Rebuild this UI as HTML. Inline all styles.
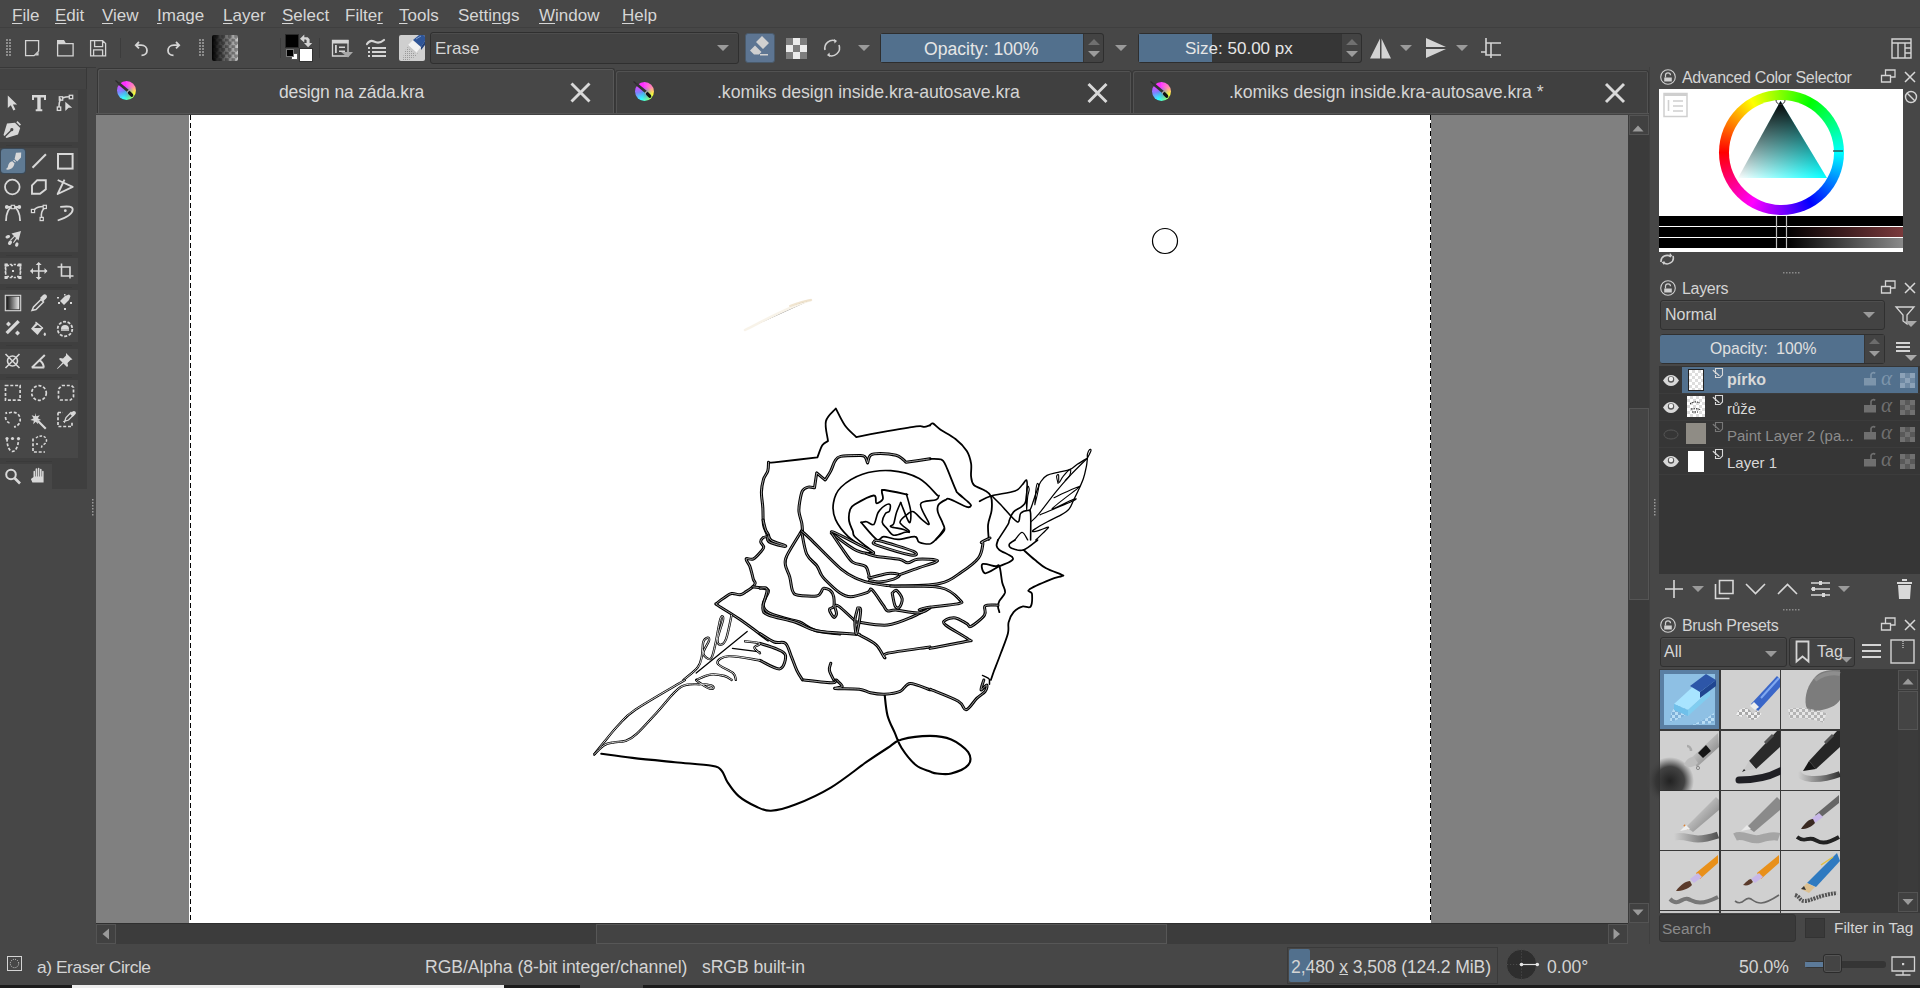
<!DOCTYPE html>
<html><head><meta charset="utf-8">
<style>
*{box-sizing:border-box;margin:0;padding:0}
html,body{width:1920px;height:988px;overflow:hidden;background:#474747;font-family:"Liberation Sans",sans-serif;color:#d2d2d2}
.a{position:absolute}
.mi{position:absolute;top:5.5px;font-size:17px;color:#d6d6d6;white-space:nowrap}
.mi u{text-decoration:underline;text-underline-offset:2px}
.t{position:absolute;white-space:nowrap}
svg{position:absolute;overflow:visible}
</style></head><body>
<!-- MENU BAR -->
<div class="a" style="left:0;top:0;width:1920px;height:28px;background:#474747;border-bottom:1px solid #3f3f3f"></div>
<div class="mi" style="left:12px"><u>F</u>ile</div>
<div class="mi" style="left:55px"><u>E</u>dit</div>
<div class="mi" style="left:102px"><u>V</u>iew</div>
<div class="mi" style="left:157px"><u>I</u>mage</div>
<div class="mi" style="left:223px"><u>L</u>ayer</div>
<div class="mi" style="left:282px"><u>S</u>elect</div>
<div class="mi" style="left:345px">Filte<u>r</u></div>
<div class="mi" style="left:399px"><u>T</u>ools</div>
<div class="mi" style="left:458px">Setti<u>n</u>gs</div>
<div class="mi" style="left:539px"><u>W</u>indow</div>
<div class="mi" style="left:622px"><u>H</u>elp</div>

<!-- TOOLBAR -->

<div class="a" style="left:0;top:67px;width:1920px;height:1px;background:#3a3a3a"></div>
<svg style="left:0;top:0" width="1920" height="70" viewBox="0 0 1920 70">
<g fill="#8c8c8c">
<rect x="6" y="39" width="2" height="2"/><rect x="9" y="39" width="2" height="2"/>
<rect x="6" y="42" width="2" height="2"/><rect x="9" y="42" width="2" height="2"/>
<rect x="6" y="45" width="2" height="2"/><rect x="9" y="45" width="2" height="2"/>
<rect x="6" y="48" width="2" height="2"/><rect x="9" y="48" width="2" height="2"/>
<rect x="6" y="51" width="2" height="2"/><rect x="9" y="51" width="2" height="2"/>
<rect x="6" y="54" width="2" height="2"/><rect x="9" y="54" width="2" height="2"/>
<rect x="199" y="39" width="2" height="2"/><rect x="202" y="39" width="2" height="2"/>
<rect x="199" y="42" width="2" height="2"/><rect x="202" y="42" width="2" height="2"/>
<rect x="199" y="45" width="2" height="2"/><rect x="202" y="45" width="2" height="2"/>
<rect x="199" y="48" width="2" height="2"/><rect x="202" y="48" width="2" height="2"/>
<rect x="199" y="51" width="2" height="2"/><rect x="202" y="51" width="2" height="2"/>
<rect x="199" y="54" width="2" height="2"/><rect x="202" y="54" width="2" height="2"/>
</g>
<g fill="none" stroke="#d4d4d4" stroke-width="1.3">
<path d="M25.6 40.6h13v10.5l-4.5 4.5h-8.5z"/>
<path d="M57.6 43.6h15.5v12.2h-15.5z"/>
<path d="M90.6 40.6h12l3 3v12.2h-15z M94.6 40.6v6h8v-6 M93.6 55.8v-6h9v6"/>
<path d="M139 42l-3.2 3.2 3.2 3.2 M136 45.2h5c4 0 6 2.5 6 5.2s-2 5-5.5 5" stroke-width="1.8"/>
<path d="M176 42l3.2 3.2-3.2 3.2 M179 45.2h-5c-4 0-6 2.5-6 5.2s2 5 5.5 5" stroke-width="1.8"/>
</g>
<path d="M57 40h7l2 3.6h-9z M35 55.6l3.6-3.6v3.6z" fill="#d4d4d4"/>
<rect x="120" y="38" width="1" height="20" fill="#3c3c3c"/>
<rect x="280" y="38" width="1" height="20" fill="#3c3c3c"/>
<rect x="319" y="38" width="1" height="20" fill="#3c3c3c"/>
</svg>
<div class="a" style="left:212px;top:35px;width:26px;height:26px;border-radius:2px;background:linear-gradient(90deg,#000 0%,rgba(0,0,0,0) 100%),repeating-conic-gradient(#888 0 25%,#c8c8c8 0 50%) 0 0/6.5px 6.5px"></div>
<!-- fg bg -->
<div class="a" style="left:285px;top:34px;width:14px;height:14px;background:#000;border:1px solid #2a2a2a"></div>
<div class="a" style="left:299px;top:48px;width:14px;height:14px;background:#fff;border:1px solid #333"></div>
<div class="a" style="left:291px;top:53px;width:7px;height:7px;background:#fff;border:1px solid #555"></div>
<div class="a" style="left:286px;top:49px;width:8px;height:8px;background:#000;border:1px solid #777"></div>
<svg style="left:0;top:0" width="1920" height="70">
<path d="M300 38.8l4.3-4.3v2.8h3.4l1.9 1.9v3.7h2.6l-4.1 4.3-4.1-4.3h2.6v-2.6l-.7-.7h-1.6v2.8z" fill="#d4d4d4"/>
<path d="M332.5 40.5h15.5v15.5h-15.5z" fill="none" stroke="#d4d4d4" stroke-width="1.3"/>
<path d="M332 40h16.5v3.5h-16.5z M335 45v8h1.8v-8z M339 46.5h6v1.6h-6z M339 50.5h6v1.6h-6z" fill="#d4d4d4"/>
<path d="M341 52h12l-5 5.5z" fill="#a8a8a8"/>
<path d="M367 44c2-3 4-4 7-2.5s6 2 10-1.5" fill="none" stroke="#d4d4d4" stroke-width="2.2" stroke-linecap="round"/>
<g fill="#d4d4d4"><rect x="368" y="47" width="2" height="2"/><rect x="372" y="47" width="14" height="2"/><rect x="368" y="51" width="2" height="2"/><rect x="372" y="51" width="14" height="2"/><rect x="368" y="55" width="2" height="2"/><rect x="372" y="55" width="14" height="2"/></g>
</svg>
<!-- eraser preset icon -->
<div class="a" style="left:399px;top:35px;width:26px;height:26px;border-radius:2px;background:#cfcfcf;overflow:hidden">
<svg width="26" height="26" style="left:0;top:0">
<defs><pattern id="dotp" width="2" height="2" patternUnits="userSpaceOnUse"><rect width="1" height="1" fill="#9a9a9a"/></pattern></defs>
<path d="M4 26c0-7 2-12 6-15l9 8c-4 4-9 7-15 7z" fill="url(#dotp)"/>
<path d="M9 10l5-5 8 7-5 6z" fill="#f2f2f2"/><path d="M9 10l8 7v3l-8-7z" fill="#c8c8c8"/>
<path d="M14 5l6-5h6v6l-4 6z" fill="#2f5597"/><path d="M22 12l4-6v4l-4 5z" fill="#1f3f7a"/>
<path d="M17 4l5-3" stroke="#7d9cd0" stroke-width="1"/>
</svg></div>
<!-- brush name combo -->
<div class="a" style="left:430px;top:32px;width:309px;height:32px;border-radius:3px;background:#424242;border:1px solid #2f2f2f;box-shadow:inset 0 1px 0 #4d4d4d"></div>
<div class="t" style="left:435px;top:39px;font-size:17px;color:#d6d6d6">Erase</div>
<svg style="left:0;top:0" width="1920" height="70">
<path d="M717 45h12l-6 6z M858 45h12l-6 6z M1115 45h12l-6 6z M1400 45h12l-6 6z M1456 45h12l-6 6z" fill="#9a9a9a"/>
</svg>
<!-- eraser toggle -->
<div class="a" style="left:745px;top:33px;width:30px;height:30px;border-radius:3px;background:#5d7592;border:1px solid #4a5a6a"></div>
<svg style="left:0;top:0" width="1920" height="70">
<path d="M756 42l6-6 7 7-6 6z M750 50.5l5-5 6.5 6.5-2.5 2.5h-5z" fill="#d0d0d0"/>
<rect x="760" y="54" width="8" height="1.5" fill="#d0d0d0"/>
<g>
<rect x="786" y="38" width="21" height="21" fill="#7e7e7e"/>
<rect x="793" y="38" width="7" height="7" fill="#ececec"/>
<rect x="786" y="45" width="7" height="7" fill="#ececec"/>
<rect x="800" y="45" width="7" height="7" fill="#ececec"/>
<rect x="793" y="52" width="7" height="7" fill="#ececec"/>
</g>
<path d="M825 50a8 8 0 0 1 11-9 M839 45a8 8 0 0 1-11 10" fill="none" stroke="#d0d0d0" stroke-width="1.6"/>
<path d="M834 39l3 2-2.5 2.5z M830 57l-3-2 2.5-2.5z" fill="#d0d0d0"/>
</svg>
<!-- opacity slider -->
<div class="a" style="left:880px;top:33px;width:224px;height:30px;border-radius:3px;background:#3b3b3b;border:1px solid #2e2e2e"></div>
<div class="a" style="left:881px;top:34px;width:202px;height:28px;background:#52708d"></div>
<div class="a" style="left:1083px;top:34px;width:20px;height:28px;background:#434343;border-left:1px solid #353535;border-radius:0 3px 3px 0"></div>
<div class="t" style="left:924px;top:39px;font-size:17.6px;color:#e6e6e6">Opacity: 100%</div>
<!-- size slider -->
<div class="a" style="left:1138px;top:33px;width:224px;height:30px;border-radius:3px;background:#363636;border:1px solid #2e2e2e"></div>
<div class="a" style="left:1139px;top:34px;width:73px;height:28px;background:#52708d"></div>
<div class="a" style="left:1341px;top:34px;width:20px;height:28px;background:#434343;border-left:1px solid #353535;border-radius:0 3px 3px 0"></div>
<div class="t" style="left:1185px;top:39px;font-size:17px;color:#e6e6e6">Size: 50.00 px</div>
<svg style="left:0;top:0" width="1920" height="70">
<path d="M1088 45l6-6 6 6z M1346 45l6-6 6 6z" fill="#707070"/>
<path d="M1088 51h12l-6 6z M1346 51h12l-6 6z" fill="#9c9c9c"/>
<path d="M1380 38.5v20h-10z M1381.5 38.5v20h9.5z" fill="#d4d4d4"/>
<path d="M1426 38v9h20z M1426 58v-9h20z" fill="#d4d4d4"/>
<path d="M1486 38v17h15 M1481 52h5 M1491 43v15 M1486 43h15" fill="none" stroke="#d4d4d4" stroke-width="1.6"/>
<path d="M1892 39h19v19h-19z M1892 43h19 M1898 43v15 M1905 43v15 M1905 48h6 M1905 53h6" fill="none" stroke="#d4d4d4" stroke-width="1.4"/>
</svg>


<!-- TOOLBOX -->
<div class="a" style="left:0;top:67px;width:87px;height:23px;background:#434343;border:1px solid #383838;border-left:none;box-shadow:inset 0 1px 0 #4d4d4d"></div>
<div class="a" style="left:0;top:89px;width:87px;height:400px;background:#3f3f3f"></div>

<div class="a" style="left:0;top:90px;width:78px;height:52px;background:#474747"></div>
<div class="a" style="left:0;top:148px;width:78px;height:104px;background:#474747"></div>
<div class="a" style="left:0;top:258px;width:78px;height:26px;background:#474747"></div>
<div class="a" style="left:0;top:290px;width:78px;height:52px;background:#474747"></div>
<div class="a" style="left:0;top:349px;width:78px;height:25px;background:#474747"></div>
<div class="a" style="left:0;top:380px;width:78px;height:78px;background:#474747"></div>
<div class="a" style="left:0;top:464px;width:52px;height:25px;background:#474747"></div>
<div class="a" style="left:1px;top:149px;width:24px;height:24px;border-radius:3px;background:#5f7a93;box-shadow:0 0 0 1px #3b4a58"></div>
<svg style="left:0;top:0" width="100" height="500">
<g fill="#3a3a3a"><rect x="6" y="145" width="66" height="1"/><rect x="6" y="255" width="66" height="1"/><rect x="6" y="287" width="66" height="1"/><rect x="6" y="345" width="66" height="1"/><rect x="6" y="377" width="66" height="1"/><rect x="6" y="461" width="46" height="1"/></g>
<g fill="#d8d8d8" stroke="none">
<!-- select arrow -->
<path d="M7.8 95.5v12.5l3-2.8 2.6 5.2 2-1-2.5-5h4.2z"/><path d="M65.3 101.7L72.2 107.8H68.6L65.3 111Z"/>
<!-- T -->
<path d="M32 95H46V100H44V97.6H40.7V109.2H42.3V111.2H35.7V109.2H37.3V97.6H34V100H32Z"/>
<!-- brush -->
<path d="M16 152.8l5.2-.2-.2 5-3.8 4-2.6-2.6z M14 159.7l2 2-.9.9-2-2z M12.3 161.2l2.2 2.2c-.6 3-2.6 6-7 6.3l-1.8-.8c1.6-.6 2.3-1.8 2.4-3.2.4-2.2 2-4.2 4.2-4.5z"/>
</g>
<g fill="none" stroke="#d8d8d8" stroke-width="1.7">
<path d="M59 107c0-4 .5-6.5 2-8.5 M62.5 98c2.5-1 5-1.2 7-1.2" stroke-width="1.5"/>
<rect x="69.3" y="95.3" width="3.4" height="3.4" stroke-width="1.3"/><rect x="59.3" y="96.8" width="3.4" height="3.4" stroke-width="1.3"/>
<rect x="57.3" y="107" width="3.4" height="3.4" stroke-width="1.3"/>
<path d="M32.5 167.7l13.4-13.4" stroke-width="2"/>
<rect x="58" y="154" width="14.6" height="14.6" stroke-width="2"/>
<circle cx="12.3" cy="187" r="7.3" stroke-width="1.8"/>
<path d="M37.2 180.2h8.6v9l-5.8 4.6h-8v-8.4z" stroke-width="1.9"/>
<path d="M57.7 180l15 6.8-15 7.2 6.8-14.4" stroke-width="1.9" stroke-linejoin="round"/>
<path d="M6 221c0-8 2.8-13.8 6.9-13.8s7.2 5.8 7.2 13.8 M6.8 207h12.5" stroke-width="1.8"/>
<path d="M34.5 209.5c2.5-2.5 5.5-3 8.5-3 M44 208.5c-2.5 2.5-3 5.5-2.4 8.7" stroke-width="1.6"/>
<rect x="31.4" y="209.4" width="3.2" height="3.2" stroke-width="1.2"/>
<rect x="43.2" y="205.3" width="3.2" height="3.2" stroke-width="1.2"/>
<rect x="40.1" y="217.4" width="3.2" height="3.2" stroke-width="1.2"/>
<path d="M57.7 220.5c6-2 15-5.5 15-11 0-3-4-3.5-12.5-2.6" stroke-width="1.8"/>
</g>
<g fill="#d8d8d8">
<circle cx="6.8" cy="207" r="1.9"/><circle cx="19.3" cy="207" r="1.9"/><rect x="11.2" y="205.3" width="3.4" height="3.4" fill="#474747" stroke="#d8d8d8" stroke-width="1.1"/>
<circle cx="65.3" cy="210.7" r="1.4"/>
<!-- pen nib -->
<path d="M17.5 121l3.5 3.5-1.2 1.2-3.5-3.5z M15 122.8l5.2 5.2-2.2 6.5-11.5 3.5-1-1 5.8-5.8a1.6 1.6 0 1 0-1-1l-5.8 5.8-1-1 3.5-11.5z"/>
<!-- multibrush -->
<path d="M21 231l-9.5 2.5 2.5 2.5-4 4 .8.8 4-4 1.2 1.2-3 4.5.8.6 3.2-4.2 1.5 1.5 2.5-9.4z"/>
<ellipse cx="7.8" cy="236.8" rx="2.4" ry="1.6" transform="rotate(-20 7.8 236.8)"/><ellipse cx="10" cy="242.8" rx="1.8" ry="2.4" transform="rotate(35 10 242.8)"/><ellipse cx="16.8" cy="244.6" rx="1.6" ry="2.3" transform="rotate(20 16.8 244.6)"/>
</g>
<!-- group3 transform -->
<g fill="none" stroke="#d8d8d8" stroke-width="1.6">
<path d="M7 265.5h2 M11 265.5h4 M17 265.5h2 M7 276.5h2 M11 276.5h4 M17 276.5h2 M5.5 267v2 M5.5 271v2 M5.5 275v0 M20.5 267v2 M20.5 271v2" stroke-dasharray="2 2"/>
<path d="M5.7 264.5v13 M20.3 264.5v13 M5.7 264.5h14.6 M5.7 277.5h14.6" stroke-dasharray="2.2 1.8"/>
<path d="M38.7 263v16 M30.7 271h16"/>
<path d="M61.5 263.5v12.5h12 M57.5 267h12.5v11.5"/>
</g>
<g fill="#d8d8d8">
<rect x="4.5" y="263.5" width="3" height="3"/><rect x="18.5" y="263.5" width="3" height="3"/><rect x="4.5" y="276" width="3" height="3"/><rect x="18.5" y="276" width="3" height="3"/><rect x="12" y="270" width="2" height="2"/>
<path d="M38.7 262l-3 3h6z M38.7 280l-3-3h6z M30 271l3-3v6z M47.5 271l-3-3v6z"/>
</g>
<!-- group4 -->
<defs><linearGradient id="tg" x1="0" x2="1" y1="0" y2="0"><stop offset="0" stop-color="#1a1a1a"/><stop offset="1" stop-color="#e8e8e8"/></linearGradient></defs>
<rect x="5.3" y="295.3" width="15.4" height="15.4" fill="none" stroke="#d8d8d8" stroke-width="1.1"/><rect x="6.8" y="296.8" width="12.4" height="12.4" fill="url(#tg)"/>
<g fill="none" stroke="#d8d8d8" stroke-width="1.5">
<path d="M32 310.5l1.5-3.5 7.5-7.5 2.5 2.5-7.5 7.5z"/>
</g>
<g fill="#d8d8d8">
<path d="M40 298l3-3c1-1 2.5-1 3.3 0s1 2.3 0 3.3l-3 3z"/>
<path d="M65 296l4-1.5 1.5 1.5-1.5 4-5 5-4-4z"/>
<rect x="58" y="302" width="2" height="2"/><rect x="64" y="308" width="2" height="2"/><rect x="70" y="302" width="2" height="2"/><rect x="64" y="294" width="1.5" height="1.5"/><rect x="57" y="297" width="2" height="1.5"/>
<!-- fill assistant -->
<path d="M5.5 332l12-12 2.3 2.3-12 12z"/>
<path d="M8.5 321.5l2.5 2.5-2.5 2.5-2.5-2.5z M17.5 330.5l2.5 2.5-2.5 2.5-2.5-2.5z"/>
<!-- bucket -->
<path d="M31 328.7l4.6-5.4 1-1 6.5 5.6-5.6 7.2z"/><ellipse cx="44.8" cy="334.3" rx="1.1" ry="1.7"/><path d="M35.5 322l7.5 6.5" stroke="#d8d8d8" stroke-width="1.2"/>
</g>
<path d="M34 328h7.5l-3.8-3.3z" fill="#474747"/>
<circle cx="65" cy="329" r="7.3" fill="none" stroke="#d8d8d8" stroke-width="1.8" stroke-dasharray="3 1.6"/>
<path d="M61 329a4 4 0 0 1 8 0z" fill="#d8d8d8"/><path d="M61 330h8" stroke="#d8d8d8" stroke-width="1.5"/>
<!-- group5 -->
<g fill="none" stroke="#d8d8d8" stroke-width="1.6">
<circle cx="12.5" cy="361" r="5"/>
<path d="M5.5 354l14 14 M19.5 354l-14 14"/>
<path d="M31.8 367.6h12.4 M31.8 367.6l13-12.6 M39.8 360.4c2.4 1.8 3.8 4.2 4 7.2" stroke-width="2"/>
</g>
<path d="M66 353l6.5 6.5-2 .5-3 3 .5 3-1 1-3.5-3.5-6 5.5-.5-.5 5.5-6-3.5-3.5 1-1 3 .5 3-3z" fill="#d8d8d8"/>
<!-- group6 selections -->
<g fill="none" stroke="#d8d8d8" stroke-width="1.7" stroke-dasharray="3 1.8">
<rect x="5.5" y="385.5" width="14.6" height="14.6"/>
<circle cx="39" cy="393" r="7.3"/>
<path d="M62 385.5h9.5l2 2v9.5l-3 3h-10l-2-2v-9z"/>
<path d="M9 413c5-2 10 0 11 5s-2 8-6 9" />
<path d="M6 412l.5 2 M5.5 417c0 3 2 5.5 4 6"/>
<path d="M7 438.5c0 8 2.5 13 5.5 13s6-5 6-13"/>
<path d="M33 438.5v13.5h12"/>
<path d="M58 412.5v14h14v-5"/>
<path d="M58 412.5h5"/>
</g>
<g fill="#d8d8d8">
<path d="M35 413l1.3 3.3 3.5-1-2 3 3.3 1.8-3.5.6.6 3.5-2.5-2.5-2.5 2.5.6-3.5-3.5-.6 3.3-1.8-2-3 3.5 1z"/>
<path d="M38.5 420l8 8-1.5 1.5-8-8z"/>
<path d="M64.5 422l1.5-4.5 5-5 2.5 2.5-5 5-4.5 1.5z" fill="none" stroke="#d8d8d8" stroke-width="1.3"/>
<path d="M70 414l2.5-2.5c.8-.8 2-.8 2.8 0s.8 2 0 2.8l-2.5 2.5z"/>
<circle cx="7" cy="438.5" r="1.6"/><circle cx="12.5" cy="438.5" r="1.6"/><circle cx="18.5" cy="438.5" r="1.6"/>
<path d="M36 438c1.5-1.5 3.5-2 5.5-2 3 0 5 2 5 4.5s-2 3.5-3.5 4.5-1.5 2-1.5 3" fill="none" stroke="#d8d8d8" stroke-width="1.5" stroke-dasharray="2.5 1.5"/>
<circle cx="37" cy="444" r="1.1"/>
</g>
<!-- zoom/pan -->
<g fill="none" stroke="#d8d8d8" stroke-width="2">
<circle cx="11" cy="474.5" r="4.8"/>
<path d="M14.5 478l5.5 5.5" stroke-width="2.6"/>
</g>
<path d="M33.5 477v-5.5c0-1 1.5-1 1.5 0v5h.6v-7.5c0-1 1.6-1 1.6 0v7.5h.6v-8c0-1 1.6-1 1.6 0v8h.6v-7c0-1 1.6-1 1.6 0v7h.5v-5c0-1 1.5-1 1.5 0v11h-11.2l-1.5-3.5z" fill="#d8d8d8"/>
</svg>


<!-- TABS -->
<div class="a" style="left:96px;top:115px;width:1532px;height:808px;background:#808080"></div>

<div class="a" style="left:96px;top:67px;width:1553px;height:48px;background:#474747"></div>
<div class="a" style="left:97px;top:68px;width:518px;height:47px;background:#474747;border:1px solid #363636;border-bottom:none;border-radius:3px 3px 0 0;box-shadow:inset 1px 1px 0 #575757,inset -1px 0 0 #575757"></div>
<div class="a" style="left:615px;top:70px;width:517px;height:45px;background:#404040;border:1px solid #383838;border-bottom:none;border-radius:3px 3px 0 0;box-shadow:inset 1px 1px 0 #525252,inset -1px 0 0 #525252"></div>
<div class="a" style="left:1132px;top:70px;width:517px;height:45px;background:#404040;border:1px solid #383838;border-bottom:none;border-radius:3px 3px 0 0;box-shadow:inset 1px 1px 0 #525252,inset -1px 0 0 #525252"></div>
<div class="a" style="left:96px;top:113px;width:1553px;height:2px;background:#424242;border-top:1px solid #555"></div>
<div class="t" style="left:279px;top:81.5px;font-size:17.5px;letter-spacing:-0.15px;color:#d8d8d8">design na záda.kra</div>
<div class="t" style="left:717px;top:81.5px;font-size:17.7px;letter-spacing:-0.05px;color:#d4d4d4">.komiks design inside.kra-autosave.kra</div>
<div class="t" style="left:1229px;top:81.5px;font-size:17.7px;letter-spacing:-0.05px;color:#d4d4d4">.komiks design inside.kra-autosave.kra *</div>
<div class="a" style="left:116.5px;top:80.5px;width:19px;height:19px;border-radius:50%;background:conic-gradient(from 0deg,#ff40ff 0deg,#ff8ab0 60deg,#ffff30 110deg,#80ff80 150deg,#30ffff 200deg,#8080ff 260deg,#ff30ff 330deg)"></div>
<div class="a" style="left:116.5px;top:80.5px;width:19px;height:19px;border-radius:50%;background:radial-gradient(circle at 55% 60%,rgba(80,140,220,.8) 0,rgba(80,140,220,0) 45%)"></div>
<svg style="left:0;top:0" width="1920" height="130"><path d="M115.5 80.5l8 6.5" stroke="#2a2a2a" stroke-width="1.2"/><path d="M119 83.5l9 7.5" stroke="#333" stroke-width="2.8" stroke-linecap="round"/><path d="M127.5 91l1.5 1.2" stroke="#bbb" stroke-width="2.6"/><path d="M129.5 92.8l2.2 2.4" stroke="#111" stroke-width="3.2" stroke-linecap="round"/></svg><div class="a" style="left:634.5px;top:81.5px;width:19px;height:19px;border-radius:50%;background:conic-gradient(from 0deg,#ff40ff 0deg,#ff8ab0 60deg,#ffff30 110deg,#80ff80 150deg,#30ffff 200deg,#8080ff 260deg,#ff30ff 330deg)"></div>
<div class="a" style="left:634.5px;top:81.5px;width:19px;height:19px;border-radius:50%;background:radial-gradient(circle at 55% 60%,rgba(80,140,220,.8) 0,rgba(80,140,220,0) 45%)"></div>
<svg style="left:0;top:0" width="1920" height="130"><path d="M633.5 81.5l8 6.5" stroke="#2a2a2a" stroke-width="1.2"/><path d="M637 84.5l9 7.5" stroke="#333" stroke-width="2.8" stroke-linecap="round"/><path d="M645.5 92l1.5 1.2" stroke="#bbb" stroke-width="2.6"/><path d="M647.5 93.8l2.2 2.4" stroke="#111" stroke-width="3.2" stroke-linecap="round"/></svg><div class="a" style="left:1151.5px;top:81.5px;width:19px;height:19px;border-radius:50%;background:conic-gradient(from 0deg,#ff40ff 0deg,#ff8ab0 60deg,#ffff30 110deg,#80ff80 150deg,#30ffff 200deg,#8080ff 260deg,#ff30ff 330deg)"></div>
<div class="a" style="left:1151.5px;top:81.5px;width:19px;height:19px;border-radius:50%;background:radial-gradient(circle at 55% 60%,rgba(80,140,220,.8) 0,rgba(80,140,220,0) 45%)"></div>
<svg style="left:0;top:0" width="1920" height="130"><path d="M1150.5 81.5l8 6.5" stroke="#2a2a2a" stroke-width="1.2"/><path d="M1154 84.5l9 7.5" stroke="#333" stroke-width="2.8" stroke-linecap="round"/><path d="M1162.5 92l1.5 1.2" stroke="#bbb" stroke-width="2.6"/><path d="M1164.5 93.8l2.2 2.4" stroke="#111" stroke-width="3.2" stroke-linecap="round"/></svg><svg style="left:0;top:0" width="1920" height="130"><path d="M571.5 83.5l18 18M589.5 83.5l-18 18" stroke="#d9d9d9" stroke-width="2.9"/></svg><svg style="left:0;top:0" width="1920" height="130"><path d="M1088.5 84l18 18M1106.5 84l-18 18" stroke="#d9d9d9" stroke-width="2.9"/></svg><svg style="left:0;top:0" width="1920" height="130"><path d="M1606 84l18 18M1624 84l-18 18" stroke="#d9d9d9" stroke-width="2.9"/></svg>

<!-- CANVAS PAGE -->
<div class="a" style="left:189px;top:115px;width:1242px;height:808px;background:#fff"></div>

<div class="a" style="left:190px;top:115px;width:1px;height:808px;background:repeating-linear-gradient(180deg,#000 0 5px,#fff 5px 8px)"></div>
<div class="a" style="left:1430px;top:115px;width:1px;height:808px;background:repeating-linear-gradient(180deg,#000 0 5px,#fff 5px 8px)"></div>
<svg style="left:0;top:0" width="1920" height="988">
<circle cx="1165" cy="241" r="12.5" fill="none" stroke="#000" stroke-width="1.2"/>
<path d="M745 330c20-10 45-24 66-30" stroke="#f3ead8" stroke-width="2.5" stroke-linecap="round" opacity=".55"/><path d="M790 306c8-3 14-5 21-6" stroke="#ecdcc0" stroke-width="2" stroke-linecap="round" opacity=".7"/>
</svg>
<svg style="left:0;top:0" width="1920" height="988"><g fill="none" stroke="#000" stroke-linejoin="round" stroke-linecap="round"><path stroke-width="1.8" d="M768.5 462.3C769.4 462.3 766.0 463.1 774.2 462.3C782.3 461.5 806.6 458.6 817.4 457.4C818.6 454.4 820.6 448.0 822.3 445.3C824.1 442.6 826.6 442.1 828.0 441.1C827.5 436.1 824.6 426.7 825.9 421.2C827.2 415.8 833.3 411.7 835.8 408.5C838.1 412.7 841.6 420.7 845.0 425.5C848.4 430.3 853.5 434.2 856.3 437.1C864.1 435.6 878.7 432.7 887.5 431.2C896.2 429.6 903.3 428.4 908.7 427.6C914.2 426.8 917.5 426.3 920.1 426.2C922.7 426.1 922.7 427.1 924.3 426.9C926.0 426.7 929.0 425.5 930.0 425.2"/><path stroke-width="1.8" d="M930.0 425.5C930.5 425.1 931.1 422.7 932.8 423.4C934.6 424.1 936.8 427.1 940.6 429.7C944.4 432.3 951.1 435.4 955.5 439.0C959.9 442.5 964.2 446.9 966.8 451.0C969.4 455.1 970.4 459.5 971.1 463.7C971.8 468.0 970.6 472.9 971.1 476.5C971.5 480.0 971.5 482.6 973.9 485.0C976.3 487.3 982.4 488.8 985.2 490.7C988.1 492.5 989.8 493.0 990.9 496.3C992.0 499.6 992.1 505.8 991.6 510.5C991.1 515.2 988.5 519.7 988.1 524.6C987.6 529.6 988.7 537.4 988.8 539.9"/><path stroke-width="3.00" d="M768.5 462.3C768.4 463.7 768.6 468.0 767.8 470.8C767.0 473.7 764.6 475.8 763.5 479.3C762.5 482.9 761.5 487.3 761.4 492.1C761.3 496.8 762.5 502.2 762.8 507.6C763.2 513.1 762.8 520.2 763.5 524.6C764.2 529.1 766.4 532.0 767.1 534.6C767.8 537.1 767.7 539.0 767.8 539.9"/><path stroke="#fff" stroke-width="0.62" d="M768.5 462.3C768.4 463.7 768.6 468.0 767.8 470.8C767.0 473.7 764.6 475.8 763.5 479.3C762.5 482.9 761.5 487.3 761.4 492.1C761.3 496.8 762.5 502.2 762.8 507.6C763.2 513.1 762.8 520.2 763.5 524.6C764.2 529.1 766.4 532.0 767.1 534.6C767.8 537.1 767.7 539.0 767.8 539.9"/><path stroke-width="3.00" d="M763.1 520.0C763.5 521.6 764.7 527.1 765.6 529.7C766.5 532.3 769.0 534.5 768.6 535.8C768.2 537.1 764.5 536.6 763.1 537.6C761.8 538.6 760.6 540.3 760.7 541.9C760.8 543.4 763.5 545.3 763.7 546.7C763.9 548.1 763.6 548.3 761.9 550.4C760.2 552.4 756.1 557.4 753.4 558.9C750.8 560.3 746.7 557.6 746.1 558.9C745.5 560.1 748.8 563.5 749.8 566.1C750.8 568.8 751.6 572.4 752.2 574.6C752.8 576.9 752.9 578.1 753.4 579.5C753.9 580.9 755.3 581.9 755.2 583.1C755.1 584.4 754.3 585.4 752.8 586.8C751.3 588.2 748.3 590.3 746.1 591.6C744.0 593.0 742.5 594.4 740.1 594.7C737.6 595.0 734.2 593.0 731.6 593.5C728.9 594.0 726.7 596.1 724.3 597.7C721.9 599.3 718.0 601.9 717.0 603.2C716.0 604.5 714.4 602.9 718.2 605.6C722.1 608.3 731.8 613.8 740.1 619.6C748.4 625.3 763.3 636.6 768.0 640.0"/><path stroke="#fff" stroke-width="0.62" d="M763.1 520.0C763.5 521.6 764.7 527.1 765.6 529.7C766.5 532.3 769.0 534.5 768.6 535.8C768.2 537.1 764.5 536.6 763.1 537.6C761.8 538.6 760.6 540.3 760.7 541.9C760.8 543.4 763.5 545.3 763.7 546.7C763.9 548.1 763.6 548.3 761.9 550.4C760.2 552.4 756.1 557.4 753.4 558.9C750.8 560.3 746.7 557.6 746.1 558.9C745.5 560.1 748.8 563.5 749.8 566.1C750.8 568.8 751.6 572.4 752.2 574.6C752.8 576.9 752.9 578.1 753.4 579.5C753.9 580.9 755.3 581.9 755.2 583.1C755.1 584.4 754.3 585.4 752.8 586.8C751.3 588.2 748.3 590.3 746.1 591.6C744.0 593.0 742.5 594.4 740.1 594.7C737.6 595.0 734.2 593.0 731.6 593.5C728.9 594.0 726.7 596.1 724.3 597.7C721.9 599.3 718.0 601.9 717.0 603.2C716.0 604.5 714.4 602.9 718.2 605.6C722.1 608.3 731.8 613.8 740.1 619.6C748.4 625.3 763.3 636.6 768.0 640.0"/><path stroke-width="3.00" d="M768.6 535.8C769.1 536.6 768.9 539.0 771.6 540.6C774.4 542.3 783.2 544.6 785.0 545.5C786.8 546.4 785.2 546.7 782.6 546.1C779.9 545.5 771.6 543.4 769.2 541.9C766.8 540.3 768.2 537.8 768.0 537.0"/><path stroke="#fff" stroke-width="0.62" d="M768.6 535.8C769.1 536.6 768.9 539.0 771.6 540.6C774.4 542.3 783.2 544.6 785.0 545.5C786.8 546.4 785.2 546.7 782.6 546.1C779.9 545.5 771.6 543.4 769.2 541.9C766.8 540.3 768.2 537.8 768.0 537.0"/><path stroke-width="3.00" d="M752.8 586.8C755.3 587.3 765.9 588.0 768.0 589.8C770.1 591.6 766.4 595.2 765.6 597.7C764.8 600.2 762.7 602.6 763.1 605.0C763.5 607.4 764.4 610.1 768.0 612.3C771.6 614.5 779.7 616.7 785.0 618.3C790.3 620.0 794.5 620.0 799.6 622.0C804.6 624.0 808.6 628.5 815.3 630.5C822.1 632.5 835.9 633.5 840.0 634.1"/><path stroke="#fff" stroke-width="0.62" d="M752.8 586.8C755.3 587.3 765.9 588.0 768.0 589.8C770.1 591.6 766.4 595.2 765.6 597.7C764.8 600.2 762.7 602.6 763.1 605.0C763.5 607.4 764.4 610.1 768.0 612.3C771.6 614.5 779.7 616.7 785.0 618.3C790.3 620.0 794.5 620.0 799.6 622.0C804.6 624.0 808.6 628.5 815.3 630.5C822.1 632.5 835.9 633.5 840.0 634.1"/><path stroke-width="3.00" d="M930.0 458.8C926.0 459.4 911.9 461.4 905.9 462.3C905.2 461.6 904.7 460.7 903.1 459.5C901.4 458.3 899.8 456.2 896.0 455.2C892.2 454.2 884.6 453.5 880.4 453.5C876.1 453.5 872.6 453.7 870.5 455.2C868.4 456.8 868.4 461.1 867.6 463.0C866.9 461.4 866.2 457.9 864.8 456.7C863.4 455.4 863.2 455.6 859.2 455.5C855.1 455.5 844.7 455.5 840.7 456.4C836.7 457.3 836.7 458.5 835.1 460.9C833.4 463.3 832.5 467.6 830.8 470.8C829.2 474.0 826.6 477.7 825.2 480.0C823.0 478.3 818.8 474.7 816.7 472.9C816.1 476.7 815.1 484.1 814.5 487.8C812.9 487.6 810.2 486.6 808.2 487.1C806.2 487.6 803.9 488.2 802.5 490.7C801.1 493.1 800.3 498.4 799.7 502.0C799.1 505.5 798.6 508.4 799.0 511.9C799.3 515.4 801.2 519.9 801.8 523.2C802.4 526.5 802.4 530.3 802.5 531.7"/><path stroke="#fff" stroke-width="0.62" d="M930.0 458.8C926.0 459.4 911.9 461.4 905.9 462.3C905.2 461.6 904.7 460.7 903.1 459.5C901.4 458.3 899.8 456.2 896.0 455.2C892.2 454.2 884.6 453.5 880.4 453.5C876.1 453.5 872.6 453.7 870.5 455.2C868.4 456.8 868.4 461.1 867.6 463.0C866.9 461.4 866.2 457.9 864.8 456.7C863.4 455.4 863.2 455.6 859.2 455.5C855.1 455.5 844.7 455.5 840.7 456.4C836.7 457.3 836.7 458.5 835.1 460.9C833.4 463.3 832.5 467.6 830.8 470.8C829.2 474.0 826.6 477.7 825.2 480.0C823.0 478.3 818.8 474.7 816.7 472.9C816.1 476.7 815.1 484.1 814.5 487.8C812.9 487.6 810.2 486.6 808.2 487.1C806.2 487.6 803.9 488.2 802.5 490.7C801.1 493.1 800.3 498.4 799.7 502.0C799.1 505.5 798.6 508.4 799.0 511.9C799.3 515.4 801.2 519.9 801.8 523.2C802.4 526.5 802.4 530.3 802.5 531.7"/><path stroke-width="1.8" d="M930.0 458.8C931.9 458.9 938.7 458.4 941.3 459.5C943.9 460.6 943.2 460.2 945.6 465.2C947.9 470.1 953.4 484.5 955.5 489.2C957.6 494.0 956.2 491.4 958.3 493.5C960.5 495.6 966.1 500.0 968.2 502.0C970.4 504.0 971.3 504.7 971.1 505.5C970.8 506.4 970.4 508.0 966.8 506.9C963.3 505.9 953.4 500.3 949.8 499.2C946.3 498.0 947.5 498.9 945.6 499.9C943.7 500.8 939.8 502.8 938.5 504.8C937.2 506.8 937.1 508.8 937.8 511.9C938.5 515.0 941.7 520.2 942.7 523.2C943.8 526.3 945.3 527.5 944.2 530.3C943.0 533.1 937.1 538.3 935.7 539.9"/><path stroke-width="1.6" d="M979.6 501.3C981.5 500.4 985.0 497.8 990.9 496.0C996.8 494.3 1009.8 492.8 1015.0 490.9C1020.2 489.1 1020.2 486.8 1022.1 485.0C1024.0 483.2 1025.5 479.6 1026.3 480.0C1027.1 480.5 1027.3 483.9 1027.0 487.8C1026.8 491.7 1027.1 499.4 1024.9 503.4C1022.7 507.4 1016.2 509.1 1013.6 511.9C1011.0 514.7 1010.3 518.3 1009.3 520.4C1008.4 522.5 1009.8 521.4 1007.9 524.6C1006.0 527.9 999.6 537.4 998.0 539.9"/><path stroke-width="1.6" d="M992.3 496.3C993.7 497.7 996.7 500.6 1000.8 504.8C1005.0 509.1 1013.8 520.4 1017.1 521.8C1020.4 523.2 1018.9 515.2 1020.7 513.3C1022.4 511.4 1026.1 510.5 1027.7 510.5C1029.4 510.5 1030.1 508.4 1030.6 513.3C1031.0 518.2 1030.6 535.5 1030.6 539.9"/><path stroke-width="1.3" d="M1015.0 539.9C1016.2 538.7 1019.9 532.4 1022.1 532.4C1024.2 532.4 1026.8 538.7 1027.7 539.9"/><path stroke-width="1.2" d="M1087.4 458.2C1088.0 456.9 1090.7 452.0 1091.0 450.6C1091.3 449.2 1090.1 449.0 1089.5 449.6C1088.9 450.2 1087.8 452.8 1087.4 454.2C1087.1 455.6 1087.4 457.5 1087.4 458.2"/><path stroke-width="1.3" d="M1087.4 458.2C1085.7 459.2 1080.2 462.4 1077.3 464.3C1074.4 466.2 1073.4 468.0 1070.2 469.4C1067.0 470.8 1062.0 471.4 1058.1 472.4C1054.2 473.4 1049.9 473.9 1047.0 475.4C1044.1 476.9 1042.4 479.3 1040.9 481.5C1039.4 483.7 1038.8 486.1 1037.8 488.6C1036.8 491.1 1035.8 493.8 1034.8 496.7C1033.8 499.6 1032.6 503.4 1031.8 505.8C1031.0 508.2 1030.0 510.0 1029.7 510.9"/><path stroke-width="1.3" d="M1087.4 458.2C1087.2 459.6 1087.1 462.9 1086.4 466.3C1085.7 469.7 1084.9 474.1 1083.4 478.5C1081.9 482.9 1079.0 488.9 1077.3 492.6C1075.6 496.3 1074.6 498.0 1073.3 500.7C1072.0 503.4 1071.2 506.4 1069.2 508.8C1067.2 511.2 1064.8 512.7 1061.1 514.9C1057.4 517.1 1051.4 519.6 1047.0 522.0C1042.6 524.4 1037.2 527.5 1034.8 529.1C1032.4 530.7 1031.9 531.4 1032.8 531.6C1033.7 531.8 1037.3 530.9 1039.9 530.1C1042.5 529.4 1048.0 526.6 1048.5 527.1C1049.0 527.6 1045.0 531.0 1042.9 533.1C1040.8 535.2 1037.0 538.9 1035.8 540.0"/><path stroke-width="1.2" d="M1087.4 458.2C1084.7 460.9 1076.4 468.8 1071.2 474.4C1066.0 480.0 1061.5 485.0 1056.1 491.6C1050.7 498.2 1043.0 508.8 1038.8 513.9C1034.6 519.0 1032.0 520.6 1030.7 522.0"/><path stroke-width="1.1" d="M1058.1 483.5C1057.8 482.3 1056.5 477.8 1056.6 476.4C1056.7 475.0 1058.2 473.9 1058.6 474.9C1059.0 475.9 1058.3 482.2 1059.1 482.5C1059.8 482.8 1061.2 478.6 1063.1 476.4C1064.9 474.2 1069.1 469.6 1070.2 469.4C1071.3 469.2 1070.5 473.5 1069.7 475.4C1068.9 477.2 1066.0 479.6 1065.2 480.5"/><path stroke-width="1.1" d="M1054.0 497.7C1057.7 496.0 1072.4 489.1 1076.3 487.6C1080.2 486.1 1081.3 485.1 1077.3 488.6C1073.2 492.1 1052.8 507.0 1052.0 508.8C1051.2 510.6 1068.8 501.1 1072.3 499.7C1075.8 498.3 1078.7 498.2 1073.3 500.7C1067.9 503.2 1045.5 512.5 1039.9 514.9"/><path stroke-width="1.1" d="M1026.7 509.9C1026.6 507.7 1026.0 500.6 1026.2 496.7C1026.4 492.8 1027.2 487.8 1027.7 486.6C1028.2 485.4 1029.2 487.9 1029.2 489.6C1029.2 491.3 1028.1 493.3 1027.7 496.7C1027.3 500.1 1026.9 507.7 1026.7 509.9"/><path stroke-width="1.1" d="M1034.8 504.8C1035.0 502.4 1035.4 494.2 1035.8 490.6C1036.2 487.1 1036.8 484.2 1037.3 483.5C1037.8 482.8 1038.9 484.4 1038.8 486.6C1038.7 488.8 1037.5 493.7 1036.8 496.7C1036.1 499.7 1035.1 503.4 1034.8 504.8"/><path stroke-width="3.00" d="M801.5 531.0C799.1 535.1 789.6 549.8 786.9 555.6C784.2 561.3 785.0 562.0 785.5 565.5C786.0 569.0 788.6 572.6 789.7 576.8C790.9 581.1 791.2 587.9 792.6 591.0C794.0 594.1 794.2 594.4 798.2 595.2C802.3 596.1 812.9 596.4 816.7 595.9C820.4 595.5 819.7 593.7 820.9 592.4C822.1 591.1 822.1 588.4 823.7 588.2C825.4 587.9 829.2 589.6 830.8 591.0C832.5 592.4 833.2 594.1 833.7 596.7C834.1 599.3 834.4 604.4 833.7 606.6C832.9 608.7 829.4 607.6 829.4 609.4C829.4 611.2 832.5 616.5 833.7 617.2C834.8 617.9 836.3 615.4 836.5 613.7C836.7 611.9 834.6 607.8 835.1 606.6C835.5 605.4 836.0 604.2 839.3 606.6C842.6 608.9 851.6 618.1 854.9 620.7C858.2 623.3 853.7 621.4 859.2 622.2C864.6 622.9 878.5 625.9 887.5 625.0C896.4 624.0 905.9 619.4 913.0 616.5C920.1 613.5 927.1 608.8 930.0 607.3"/><path stroke="#fff" stroke-width="0.62" d="M801.5 531.0C799.1 535.1 789.6 549.8 786.9 555.6C784.2 561.3 785.0 562.0 785.5 565.5C786.0 569.0 788.6 572.6 789.7 576.8C790.9 581.1 791.2 587.9 792.6 591.0C794.0 594.1 794.2 594.4 798.2 595.2C802.3 596.1 812.9 596.4 816.7 595.9C820.4 595.5 819.7 593.7 820.9 592.4C822.1 591.1 822.1 588.4 823.7 588.2C825.4 587.9 829.2 589.6 830.8 591.0C832.5 592.4 833.2 594.1 833.7 596.7C834.1 599.3 834.4 604.4 833.7 606.6C832.9 608.7 829.4 607.6 829.4 609.4C829.4 611.2 832.5 616.5 833.7 617.2C834.8 617.9 836.3 615.4 836.5 613.7C836.7 611.9 834.6 607.8 835.1 606.6C835.5 605.4 836.0 604.2 839.3 606.6C842.6 608.9 851.6 618.1 854.9 620.7C858.2 623.3 853.7 621.4 859.2 622.2C864.6 622.9 878.5 625.9 887.5 625.0C896.4 624.0 905.9 619.4 913.0 616.5C920.1 613.5 927.1 608.8 930.0 607.3"/><path stroke-width="3.00" d="M801.5 531.0C802.4 534.9 804.2 548.4 806.7 554.2C809.3 559.9 814.3 562.2 816.7 565.5C819.0 568.8 819.5 571.6 820.9 574.0C822.3 576.4 822.1 576.6 825.2 579.7C828.2 582.7 835.1 589.6 839.3 592.4C843.6 595.2 845.9 596.7 850.7 596.7C855.4 596.7 864.1 593.6 867.6 592.4C871.2 591.2 869.3 587.5 871.9 589.6C874.5 591.7 880.6 601.6 883.2 605.2C885.8 608.7 885.4 610.0 887.5 610.8C889.6 611.6 890.8 609.8 896.0 610.1C901.2 610.5 913.0 613.3 918.6 612.9C924.3 612.6 928.1 608.8 930.0 608.0"/><path stroke="#fff" stroke-width="0.62" d="M801.5 531.0C802.4 534.9 804.2 548.4 806.7 554.2C809.3 559.9 814.3 562.2 816.7 565.5C819.0 568.8 819.5 571.6 820.9 574.0C822.3 576.4 822.1 576.6 825.2 579.7C828.2 582.7 835.1 589.6 839.3 592.4C843.6 595.2 845.9 596.7 850.7 596.7C855.4 596.7 864.1 593.6 867.6 592.4C871.2 591.2 869.3 587.5 871.9 589.6C874.5 591.7 880.6 601.6 883.2 605.2C885.8 608.7 885.4 610.0 887.5 610.8C889.6 611.6 890.8 609.8 896.0 610.1C901.2 610.5 913.0 613.3 918.6 612.9C924.3 612.6 928.1 608.8 930.0 608.0"/><path stroke-width="3.00" d="M760.0 588.2C761.2 588.4 766.6 586.3 767.1 589.6C767.6 592.9 762.6 603.7 762.8 608.0C763.1 612.2 763.1 612.7 768.5 615.1C773.9 617.4 787.4 619.6 795.4 622.2C803.4 624.7 806.5 628.6 816.7 630.7C826.8 632.7 849.2 633.5 856.3 634.2C863.4 634.9 855.8 633.1 859.2 634.9C862.5 636.7 871.9 641.0 876.1 644.8C880.4 648.6 882.8 656.1 884.6 657.6C886.5 659.0 879.9 655.1 887.5 653.3C895.0 651.5 922.9 648.0 930.0 646.9"/><path stroke="#fff" stroke-width="0.62" d="M760.0 588.2C761.2 588.4 766.6 586.3 767.1 589.6C767.6 592.9 762.6 603.7 762.8 608.0C763.1 612.2 763.1 612.7 768.5 615.1C773.9 617.4 787.4 619.6 795.4 622.2C803.4 624.7 806.5 628.6 816.7 630.7C826.8 632.7 849.2 633.5 856.3 634.2C863.4 634.9 855.8 633.1 859.2 634.9C862.5 636.7 871.9 641.0 876.1 644.8C880.4 648.6 882.8 656.1 884.6 657.6C886.5 659.0 879.9 655.1 887.5 653.3C895.0 651.5 922.9 648.0 930.0 646.9"/><path stroke-width="3.00" d="M857.7 608.0C857.3 610.1 855.1 616.4 854.9 620.7C854.7 625.1 855.6 634.0 856.3 634.2C857.0 634.4 858.4 626.3 859.2 622.2C859.9 618.0 860.8 611.8 860.6 609.4C860.3 607.0 858.2 608.2 857.7 608.0"/><path stroke="#fff" stroke-width="0.62" d="M857.7 608.0C857.3 610.1 855.1 616.4 854.9 620.7C854.7 625.1 855.6 634.0 856.3 634.2C857.0 634.4 858.4 626.3 859.2 622.2C859.9 618.0 860.8 611.8 860.6 609.4C860.3 607.0 858.2 608.2 857.7 608.0"/><path stroke-width="3.00" d="M760.0 633.5C762.4 634.9 769.9 640.3 774.2 642.0C778.4 643.6 782.7 641.0 785.5 643.4C788.3 645.8 789.3 651.7 791.2 656.1C793.1 660.6 794.9 666.3 796.8 670.3C798.7 674.3 801.5 678.3 802.5 679.9"/><path stroke="#fff" stroke-width="0.62" d="M760.0 633.5C762.4 634.9 769.9 640.3 774.2 642.0C778.4 643.6 782.7 641.0 785.5 643.4C788.3 645.8 789.3 651.7 791.2 656.1C793.1 660.6 794.9 666.3 796.8 670.3C798.7 674.3 801.5 678.3 802.5 679.9"/><path stroke-width="3.00" d="M760.0 643.4C762.8 644.3 772.7 647.1 777.0 649.1C781.2 651.1 785.0 652.1 785.5 655.4C786.0 658.7 784.1 668.1 779.8 668.9C775.6 669.7 763.3 661.8 760.0 660.4"/><path stroke="#fff" stroke-width="0.62" d="M760.0 643.4C762.8 644.3 772.7 647.1 777.0 649.1C781.2 651.1 785.0 652.1 785.5 655.4C786.0 658.7 784.1 668.1 779.8 668.9C775.6 669.7 763.3 661.8 760.0 660.4"/><path stroke-width="3.00" d="M830.8 663.2C830.6 664.4 828.9 667.5 829.4 670.3C829.9 673.1 832.9 678.3 833.7 679.9"/><path stroke="#fff" stroke-width="0.62" d="M830.8 663.2C830.6 664.4 828.9 667.5 829.4 670.3C829.9 673.1 832.9 678.3 833.7 679.9"/><path stroke-width="1.8" d="M998.0 540.0C997.8 540.9 996.3 544.0 996.6 545.7C996.8 547.3 996.8 548.0 999.4 549.9C1002.0 551.8 1010.3 555.1 1012.2 557.0C1014.0 558.9 1012.9 559.7 1010.7 561.2C1008.6 562.8 1003.7 564.2 999.4 566.2C995.2 568.2 988.1 573.6 985.2 573.3C982.4 572.9 980.8 565.3 982.4 564.1C984.1 562.9 992.3 565.8 995.2 566.2C998.0 566.6 998.2 563.5 999.4 566.2C1000.6 568.9 1001.3 578.1 1002.2 582.5C1003.2 586.9 1005.5 589.3 1005.1 592.4C1004.6 595.5 1000.6 598.5 999.4 600.9C998.2 603.3 998.0 604.7 998.0 606.6C998.0 608.5 999.2 611.3 999.4 612.2"/><path stroke-width="3.00" d="M998.0 605.2C995.9 605.3 987.5 604.2 985.2 605.9C983.0 607.5 986.9 611.6 984.5 615.1C982.2 618.5 974.0 625.0 971.1 626.4C968.1 627.8 969.4 625.0 966.8 623.6C964.2 622.2 959.0 618.5 955.5 617.9C952.0 617.3 947.2 618.8 945.6 620.0C943.9 621.2 941.8 621.8 945.6 625.0C949.4 628.2 964.7 636.4 968.2 639.2C971.8 641.9 973.2 639.7 966.8 641.3C960.5 642.8 936.1 647.2 930.0 648.4"/><path stroke="#fff" stroke-width="0.62" d="M998.0 605.2C995.9 605.3 987.5 604.2 985.2 605.9C983.0 607.5 986.9 611.6 984.5 615.1C982.2 618.5 974.0 625.0 971.1 626.4C968.1 627.8 969.4 625.0 966.8 623.6C964.2 622.2 959.0 618.5 955.5 617.9C952.0 617.3 947.2 618.8 945.6 620.0C943.9 621.2 941.8 621.8 945.6 625.0C949.4 628.2 964.7 636.4 968.2 639.2C971.8 641.9 973.2 639.7 966.8 641.3C960.5 642.8 936.1 647.2 930.0 648.4"/><path stroke-width="1.6" d="M1015.0 540.0C1014.0 540.7 1009.8 542.8 1009.3 544.2C1008.8 545.7 1009.8 547.6 1012.2 548.5C1014.5 549.4 1019.2 551.3 1023.5 549.9C1027.7 548.5 1035.3 541.7 1037.6 540.0"/><path stroke-width="1.8" d="M1023.5 549.9C1025.4 551.6 1031.0 556.8 1034.8 559.8C1038.6 562.9 1041.7 565.8 1046.1 568.3C1050.6 570.8 1059.1 573.4 1061.7 574.7C1064.3 576.0 1063.6 575.3 1061.7 576.1C1059.8 576.9 1055.8 577.4 1050.4 579.7C1045.0 581.9 1032.2 587.2 1029.2 589.6C1026.1 591.9 1031.7 591.0 1032.0 593.8C1032.2 596.7 1032.2 604.4 1030.6 606.6C1028.9 608.7 1024.9 605.6 1022.1 606.6C1019.2 607.5 1015.8 609.6 1013.6 612.2C1011.3 614.8 1009.6 618.6 1008.6 622.2C1007.7 625.7 1009.2 628.3 1007.9 633.5C1006.6 638.7 1003.2 646.9 1000.8 653.3C998.5 659.7 995.4 667.3 993.7 671.7C992.1 676.2 991.4 678.6 990.9 679.9"/><path stroke-width="1.3" d="M982.4 675.3C983.4 675.7 986.9 677.3 988.1 678.1C989.3 678.9 989.3 679.6 989.5 679.9"/><path stroke-width="1.7" d="M937.6 495.5C934.5 492.7 926.9 482.6 919.2 478.5C911.4 474.4 900.3 471.4 890.8 470.7C881.4 470.0 870.8 471.5 862.5 474.2C854.2 477.0 846.1 482.3 841.2 487.0C836.4 491.7 834.4 497.1 833.5 502.6C832.5 508.0 833.1 513.9 835.6 519.6C838.1 525.2 843.1 531.6 848.3 536.6C853.5 541.5 862.5 546.7 866.7 549.3C871.0 551.9 872.6 551.7 873.8 552.2"/><path stroke-width="1.8" d="M907.4 494.6C903.6 493.8 888.9 490.5 884.6 490.0C880.4 489.5 882.2 490.3 881.9 491.8C881.6 493.3 883.7 497.2 882.8 499.1C881.9 501.0 877.9 503.8 876.4 503.2C874.9 502.6 877.3 495.3 873.7 495.5C870.1 495.7 858.6 502.2 854.6 504.6C850.6 507.0 850.9 507.3 850.0 510.0C849.1 512.7 848.6 517.5 849.1 521.0C849.6 524.5 851.9 528.4 852.8 531.0C853.7 533.6 852.3 533.9 854.6 536.5C856.9 539.1 863.2 543.9 866.4 546.5C869.6 549.1 872.5 551.1 873.7 552.0"/><path stroke-width="1.6" d="M861.1 522.4C862.0 522.3 864.6 521.3 866.7 521.7C868.9 522.1 871.9 526.1 873.8 524.5C875.7 523.0 876.2 515.7 878.1 512.5C880.0 509.3 883.1 506.7 885.2 505.4C887.2 504.1 889.4 503.8 890.1 504.7C890.8 505.6 890.2 509.5 889.4 511.1C888.6 512.6 886.3 512.0 885.2 513.9C884.0 515.8 882.1 520.0 882.3 522.4C882.6 524.8 884.7 525.9 886.6 528.1C888.5 530.2 890.6 534.4 893.7 535.2C896.7 535.9 902.4 533.0 905.0 532.3C907.6 531.6 910.1 532.6 909.2 530.9C908.4 529.3 900.3 525.2 900.0 522.4C899.8 519.6 905.6 515.7 907.8 513.9C910.1 512.1 911.1 510.8 913.5 511.8C915.8 512.7 919.4 517.6 922.0 519.6C924.6 521.6 929.3 526.4 929.1 523.8C928.8 521.2 919.4 508.0 920.6 504.0C921.7 500.0 933.1 501.2 936.1 499.7C939.2 498.3 938.5 496.2 939.0 495.5"/><path stroke-width="1.6" d="M900.7 502.6C900.0 504.2 897.7 509.0 896.5 512.5C895.3 516.0 894.6 521.5 893.7 523.8C892.7 526.2 889.2 525.7 890.8 526.7C892.5 527.6 900.5 528.5 903.6 529.5C906.6 530.4 908.3 531.9 909.2 532.3"/><path stroke-width="1.6" d="M900.7 502.6C902.2 505.9 907.6 521.0 909.2 522.4C910.9 523.8 911.1 515.8 910.7 511.1C910.2 506.4 907.1 496.9 906.4 494.1"/><path stroke-width="1.7" d="M861.1 522.4C863.7 525.2 872.9 537.0 876.7 539.4C880.4 541.8 880.2 536.6 883.7 536.6C887.3 536.6 892.7 539.4 897.9 539.4C903.1 539.4 911.4 536.1 914.9 536.6C918.4 537.0 916.6 541.1 919.2 542.2C921.7 543.4 927.3 544.6 930.5 543.7C933.7 542.7 936.1 538.9 938.4 536.5C940.7 534.1 943.1 530.2 944.0 529.0"/><path stroke-width="3.00" d="M831.3 533.0C831.8 532.9 829.9 530.6 834.2 532.3C838.4 534.1 850.2 540.2 856.8 543.7C863.4 547.1 873.8 551.7 873.8 552.9C873.8 554.0 863.9 554.0 856.8 550.7C849.7 547.4 835.6 536.0 831.3 533.0"/><path stroke="#fff" stroke-width="0.62" d="M831.3 533.0C831.8 532.9 829.9 530.6 834.2 532.3C838.4 534.1 850.2 540.2 856.8 543.7C863.4 547.1 873.8 551.7 873.8 552.9C873.8 554.0 863.9 554.0 856.8 550.7C849.7 547.4 835.6 536.0 831.3 533.0"/><path stroke-width="3.00" d="M873.8 542.2C874.8 542.0 872.9 539.3 879.5 540.8C886.1 542.4 908.3 549.1 913.5 551.4C918.7 553.8 916.8 556.0 910.7 555.0C904.5 553.9 882.8 547.2 876.7 545.1C870.5 542.9 874.3 542.7 873.8 542.2"/><path stroke="#fff" stroke-width="0.62" d="M873.8 542.2C874.8 542.0 872.9 539.3 879.5 540.8C886.1 542.4 908.3 549.1 913.5 551.4C918.7 553.8 916.8 556.0 910.7 555.0C904.5 553.9 882.8 547.2 876.7 545.1C870.5 542.9 874.3 542.7 873.8 542.2"/><path stroke-width="3.00" d="M801.5 531.0C802.9 532.3 803.4 532.2 810.0 538.6C816.6 545.0 833.2 562.4 841.2 569.2C849.3 575.9 853.1 576.7 858.2 579.1C863.4 581.4 865.8 582.1 872.4 583.3C879.0 584.5 886.6 586.1 897.9 586.1C909.2 586.1 929.8 585.7 940.4 583.3C951.0 581.0 955.3 576.2 961.6 572.0C968.0 567.7 975.1 562.5 978.6 557.8C982.2 553.1 982.4 546.3 982.9 543.7C983.4 541.1 980.3 543.2 981.5 542.2C982.7 541.3 988.6 538.7 990.0 538.0"/><path stroke="#fff" stroke-width="0.62" d="M801.5 531.0C802.9 532.3 803.4 532.2 810.0 538.6C816.6 545.0 833.2 562.4 841.2 569.2C849.3 575.9 853.1 576.7 858.2 579.1C863.4 581.4 865.8 582.1 872.4 583.3C879.0 584.5 886.6 586.1 897.9 586.1C909.2 586.1 929.8 585.7 940.4 583.3C951.0 581.0 955.3 576.2 961.6 572.0C968.0 567.7 975.1 562.5 978.6 557.8C982.2 553.1 982.4 546.3 982.9 543.7C983.4 541.1 980.3 543.2 981.5 542.2C982.7 541.3 988.6 538.7 990.0 538.0"/><path stroke-width="3.00" d="M832.0 533.7C833.8 536.3 839.2 544.6 842.7 549.3C846.1 554.0 848.8 559.2 852.6 562.1C856.4 564.9 862.6 564.2 865.3 566.3C868.0 568.4 868.0 572.9 868.9 574.8C869.7 576.7 867.1 577.9 870.3 577.6C873.5 577.4 883.1 573.9 888.0 573.4C892.8 572.9 898.4 573.9 899.3 574.8C900.3 575.8 897.0 577.9 893.7 579.1C890.3 580.2 883.5 581.7 879.5 581.9C875.5 582.1 871.2 580.7 869.6 580.5"/><path stroke="#fff" stroke-width="0.62" d="M832.0 533.7C833.8 536.3 839.2 544.6 842.7 549.3C846.1 554.0 848.8 559.2 852.6 562.1C856.4 564.9 862.6 564.2 865.3 566.3C868.0 568.4 868.0 572.9 868.9 574.8C869.7 576.7 867.1 577.9 870.3 577.6C873.5 577.4 883.1 573.9 888.0 573.4C892.8 572.9 898.4 573.9 899.3 574.8C900.3 575.8 897.0 577.9 893.7 579.1C890.3 580.2 883.5 581.7 879.5 581.9C875.5 582.1 871.2 580.7 869.6 580.5"/><path stroke-width="3.00" d="M899.3 574.8C902.6 573.6 912.8 570.1 919.2 567.7C925.5 565.4 937.8 562.1 937.6 560.7C937.3 559.2 922.7 558.9 917.7 559.2C912.8 559.6 910.9 562.8 907.8 562.8C904.7 562.8 904.5 560.3 899.3 559.2C894.1 558.2 882.1 557.3 876.7 556.4C871.2 555.5 868.4 554.0 866.7 553.6"/><path stroke="#fff" stroke-width="0.62" d="M899.3 574.8C902.6 573.6 912.8 570.1 919.2 567.7C925.5 565.4 937.8 562.1 937.6 560.7C937.3 559.2 922.7 558.9 917.7 559.2C912.8 559.6 910.9 562.8 907.8 562.8C904.7 562.8 904.5 560.3 899.3 559.2C894.1 558.2 882.1 557.3 876.7 556.4C871.2 555.5 868.4 554.0 866.7 553.6"/><path stroke-width="3.00" d="M890.8 586.1C899.1 586.4 928.8 585.2 940.4 587.6C952.0 589.9 957.4 597.6 960.2 600.3C963.1 603.0 962.8 602.7 957.4 603.9C952.0 605.0 934.0 606.4 927.6 607.4C921.3 608.4 920.6 609.5 919.2 609.9"/><path stroke="#fff" stroke-width="0.62" d="M890.8 586.1C899.1 586.4 928.8 585.2 940.4 587.6C952.0 589.9 957.4 597.6 960.2 600.3C963.1 603.0 962.8 602.7 957.4 603.9C952.0 605.0 934.0 606.4 927.6 607.4C921.3 608.4 920.6 609.5 919.2 609.9"/><path stroke-width="3.00" d="M892.2 593.2C892.9 592.8 894.8 589.5 896.5 590.4C898.1 591.3 901.7 596.1 902.2 598.9C902.6 601.7 900.5 606.2 899.3 607.4C898.1 608.6 896.3 608.3 895.1 606.0C893.9 603.6 892.7 595.4 892.2 593.2"/><path stroke="#fff" stroke-width="0.62" d="M892.2 593.2C892.9 592.8 894.8 589.5 896.5 590.4C898.1 591.3 901.7 596.1 902.2 598.9C902.6 601.7 900.5 606.2 899.3 607.4C898.1 608.6 896.3 608.3 895.1 606.0C893.9 603.6 892.7 595.4 892.2 593.2"/><path stroke-width="2.35" d="M683.5 679.9C685.8 677.9 694.6 671.4 697.6 667.5C700.7 663.5 701.0 660.4 701.9 656.1C702.8 651.9 702.4 645.1 703.3 642.0C704.3 638.9 706.6 638.0 707.6 637.7C708.5 637.5 709.7 638.0 709.0 640.6C708.3 643.2 703.1 650.2 703.3 653.3C703.6 656.4 708.5 659.9 710.4 659.0C712.3 658.0 713.0 654.3 714.6 647.6C716.3 641.0 718.9 624.0 720.3 619.3C721.7 614.6 723.6 616.0 723.1 619.3C722.7 622.6 718.0 634.9 717.5 639.2C717.0 643.4 718.9 644.8 720.3 644.8C721.7 644.8 724.1 644.1 726.0 639.2C727.9 634.2 730.7 619.1 731.6 615.1"/><path stroke="#fff" stroke-width="0.85" d="M683.5 679.9C685.8 677.9 694.6 671.4 697.6 667.5C700.7 663.5 701.0 660.4 701.9 656.1C702.8 651.9 702.4 645.1 703.3 642.0C704.3 638.9 706.6 638.0 707.6 637.7C708.5 637.5 709.7 638.0 709.0 640.6C708.3 643.2 703.1 650.2 703.3 653.3C703.6 656.4 708.5 659.9 710.4 659.0C712.3 658.0 713.0 654.3 714.6 647.6C716.3 641.0 718.9 624.0 720.3 619.3C721.7 614.6 723.6 616.0 723.1 619.3C722.7 622.6 718.0 634.9 717.5 639.2C717.0 643.4 718.9 644.8 720.3 644.8C721.7 644.8 724.1 644.1 726.0 639.2C727.9 634.2 730.7 619.1 731.6 615.1"/><path stroke-width="1.25" d="M696.2 673.1L747.2 631.4"/><path stroke-width="1.2" d="M732.4 648.4L760.0 651.9"/><path stroke-width="2.35" d="M745.1 641.3C747.6 641.6 758.4 642.3 760.0 643.4C761.5 644.5 754.3 646.0 754.3 647.6C754.3 649.3 759.0 652.4 760.0 653.3"/><path stroke="#fff" stroke-width="0.85" d="M745.1 641.3C747.6 641.6 758.4 642.3 760.0 643.4C761.5 644.5 754.3 646.0 754.3 647.6C754.3 649.3 759.0 652.4 760.0 653.3"/><path stroke-width="2.35" d="M760.0 660.4C754.8 659.7 735.9 655.7 728.8 656.1C721.7 656.6 716.8 660.4 717.5 663.2C718.2 666.1 730.0 670.4 733.1 673.1C736.1 675.9 735.4 678.8 735.9 679.9"/><path stroke="#fff" stroke-width="0.85" d="M760.0 660.4C754.8 659.7 735.9 655.7 728.8 656.1C721.7 656.6 716.8 660.4 717.5 663.2C718.2 666.1 730.0 670.4 733.1 673.1C736.1 675.9 735.4 678.8 735.9 679.9"/><path stroke-width="2.35" d="M696.2 679.9C698.6 679.0 705.7 675.2 710.4 674.6C715.1 673.9 721.0 675.1 724.6 676.0C728.1 676.9 730.5 679.3 731.6 679.9"/><path stroke="#fff" stroke-width="0.85" d="M696.2 679.9C698.6 679.0 705.7 675.2 710.4 674.6C715.1 673.9 721.0 675.1 724.6 676.0C728.1 676.9 730.5 679.3 731.6 679.9"/><path stroke-width="2.35" d="M684.9 680.0C676.6 685.0 646.4 702.2 635.3 709.7C624.2 717.3 623.8 719.7 618.3 725.3C612.9 731.0 606.8 738.9 602.7 743.7C598.7 748.6 595.7 752.6 594.2 754.4"/><path stroke="#fff" stroke-width="0.85" d="M684.9 680.0C676.6 685.0 646.4 702.2 635.3 709.7C624.2 717.3 623.8 719.7 618.3 725.3C612.9 731.0 606.8 738.9 602.7 743.7C598.7 748.6 595.7 752.6 594.2 754.4"/><path stroke-width="2.35" d="M594.2 754.4C595.9 752.8 600.9 747.2 604.2 745.2C607.5 743.1 610.5 743.0 614.1 742.3C617.6 741.6 621.6 742.3 625.4 740.9C629.2 739.5 631.3 738.8 636.7 733.8C642.2 728.9 650.7 719.0 658.0 711.2C665.3 703.4 673.6 691.6 680.7 687.1C687.7 682.6 695.3 684.5 700.5 684.2C705.7 684.0 709.7 685.0 711.8 685.7C713.9 686.4 713.9 688.1 713.2 688.5C712.5 688.9 710.2 689.0 707.6 687.8C705.0 686.6 699.5 682.7 697.6 681.4C695.8 680.1 696.5 680.2 696.2 680.0"/><path stroke="#fff" stroke-width="0.85" d="M594.2 754.4C595.9 752.8 600.9 747.2 604.2 745.2C607.5 743.1 610.5 743.0 614.1 742.3C617.6 741.6 621.6 742.3 625.4 740.9C629.2 739.5 631.3 738.8 636.7 733.8C642.2 728.9 650.7 719.0 658.0 711.2C665.3 703.4 673.6 691.6 680.7 687.1C687.7 682.6 695.3 684.5 700.5 684.2C705.7 684.0 709.7 685.0 711.8 685.7C713.9 686.4 713.9 688.1 713.2 688.5C712.5 688.9 710.2 689.0 707.6 687.8C705.0 686.6 699.5 682.7 697.6 681.4C695.8 680.1 696.5 680.2 696.2 680.0"/><path stroke-width="2.1" d="M601.3 753.7C606.5 754.4 620.2 756.5 632.5 757.9C644.8 759.3 661.8 760.9 675.0 762.2C688.2 763.5 704.0 764.3 711.8 765.7C719.6 767.1 719.1 768.0 721.7 770.7C724.3 773.4 724.6 777.8 727.4 782.0C730.2 786.2 733.9 792.0 738.7 796.1C743.5 800.2 750.6 804.0 756.0 806.5C761.4 809.0 764.4 811.1 771.0 810.8C777.6 810.5 785.4 808.5 795.4 804.6C805.4 800.7 819.0 794.7 830.8 787.6C842.6 780.5 856.8 768.8 866.2 762.2C875.7 755.6 881.6 751.8 887.5 748.0C893.4 744.2 894.5 741.5 901.6 739.5C908.7 737.5 921.7 735.9 930.0 735.9C938.3 735.9 944.8 736.8 951.2 739.5C957.6 742.2 965.4 748.0 968.2 752.2C971.0 756.5 971.0 761.5 968.2 765.0C965.4 768.5 956.4 772.1 951.2 773.5C946.0 774.9 940.6 773.8 937.1 773.5C933.6 773.2 933.5 772.9 930.0 771.5C926.5 770.1 920.5 768.9 915.8 765.0C911.1 761.1 905.1 753.4 901.6 748.0C898.1 742.6 897.0 737.8 894.6 732.4C892.2 727.0 889.2 721.8 887.5 715.4C885.8 709.0 885.1 697.7 884.6 694.2"/><path stroke-width="3.00" d="M803.9 680.0C808.6 680.5 827.0 682.8 832.2 682.8C837.4 682.8 834.6 680.5 835.1 680.0"/><path stroke="#fff" stroke-width="0.62" d="M803.9 680.0C808.6 680.5 827.0 682.8 832.2 682.8C837.4 682.8 834.6 680.5 835.1 680.0"/><path stroke-width="3.00" d="M836.5 680.0C837.4 681.1 842.4 685.0 842.2 686.4C841.9 687.8 832.2 688.0 835.1 688.5C837.9 689.0 853.2 688.5 859.2 689.2C865.1 689.9 866.2 691.9 870.5 692.7C874.7 693.6 879.7 694.4 884.6 694.2C889.6 693.9 896.0 693.1 900.2 691.3C904.5 689.6 905.2 683.8 910.1 683.5C915.1 683.3 926.7 688.9 930.0 689.9"/><path stroke="#fff" stroke-width="0.62" d="M836.5 680.0C837.4 681.1 842.4 685.0 842.2 686.4C841.9 687.8 832.2 688.0 835.1 688.5C837.9 689.0 853.2 688.5 859.2 689.2C865.1 689.9 866.2 691.9 870.5 692.7C874.7 693.6 879.7 694.4 884.6 694.2C889.6 693.9 896.0 693.1 900.2 691.3C904.5 689.6 905.2 683.8 910.1 683.5C915.1 683.3 926.7 688.9 930.0 689.9"/><path stroke-width="3.00" d="M930.0 689.2C934.7 691.2 952.3 697.8 958.3 701.2C964.3 704.7 963.1 710.2 966.1 709.7C969.2 709.3 973.6 701.5 976.7 698.4C979.9 695.3 983.6 693.6 985.2 691.3C986.9 689.1 987.4 685.2 986.7 685.0C985.9 684.7 981.5 690.7 981.0 689.9C980.5 689.1 983.4 681.7 983.8 680.0"/><path stroke="#fff" stroke-width="0.62" d="M930.0 689.2C934.7 691.2 952.3 697.8 958.3 701.2C964.3 704.7 963.1 710.2 966.1 709.7C969.2 709.3 973.6 701.5 976.7 698.4C979.9 695.3 983.6 693.6 985.2 691.3C986.9 689.1 987.4 685.2 986.7 685.0C985.9 684.7 981.5 690.7 981.0 689.9C980.5 689.1 983.4 681.7 983.8 680.0"/><path stroke-width="1.5" d="M989.5 680.0L989.5 684.2"/></g></svg>

<!-- SCROLLBARS -->

<!-- v scrollbar -->
<div class="a" style="left:1628px;top:115px;width:21px;height:808px;background:#3b3b3b"></div>
<div class="a" style="left:1629px;top:115px;width:20px;height:20px;background:#414141;border:1px solid #545454"></div>
<div class="a" style="left:1629px;top:903px;width:20px;height:20px;background:#414141;border:1px solid #545454"></div>
<div class="a" style="left:1629px;top:408px;width:20px;height:192px;background:#444;border:1px solid #555"></div>
<!-- h scrollbar -->
<div class="a" style="left:96px;top:923px;width:1532px;height:21px;background:#3c3c3c;border-top:1px solid #2f2f2f"></div>
<div class="a" style="left:96px;top:924px;width:20px;height:20px;background:#414141;border:1px solid #545454"></div>
<div class="a" style="left:1608px;top:924px;width:20px;height:20px;background:#414141;border:1px solid #545454"></div>
<div class="a" style="left:596px;top:924px;width:571px;height:20px;background:#434343;border:1px solid #575757"></div>
<svg style="left:0;top:0" width="1920" height="988">
<path d="M1632.5 131.5l5.5-6 5.5 6z M1632.5 909.5l5.5 6 5.5-6z M109 928.5v11l-6.5-5.5z M1613.5 928.5v11l6.5-5.5z" fill="#9a9a9a"/>
<g fill="#9a9a9a"><rect x="92" y="499" width="1.5" height="1.5"/><rect x="92" y="502" width="1.5" height="1.5"/><rect x="92" y="505" width="1.5" height="1.5"/><rect x="92" y="508" width="1.5" height="1.5"/><rect x="92" y="511" width="1.5" height="1.5"/><rect x="92" y="514" width="1.5" height="1.5"/>
</g>
</svg>


<!-- STATUS BAR -->

<div class="a" style="left:7px;top:956px;width:15px;height:15px;border:1.5px solid #d4d4d4"></div>
<svg style="left:0;top:0" width="1920" height="988">
<circle cx="14.5" cy="963.5" r="4.2" fill="none" stroke="#d4d4d4" stroke-width="1" stroke-dasharray="1 1.2"/>
</svg>
<div class="t" style="left:37px;top:956.5px;font-size:17.4px;letter-spacing:-0.45px;color:#d4d4d4">a) Eraser Circle</div>
<div class="t" style="left:425px;top:956.5px;font-size:17.6px;letter-spacing:-0.05px;color:#d4d4d4">RGB/Alpha (8-bit integer/channel) &nbsp;&nbsp;sRGB built-in</div>
<div class="a" style="left:1287px;top:947px;width:211px;height:37px;border:1px solid #3a3a3a;background:#474747"></div>
<div class="a" style="left:1289px;top:949px;width:21px;height:33px;background:#52708d;border-radius:2px"></div>
<div class="t" style="left:1291px;top:956.5px;font-size:17.6px;letter-spacing:-0.1px;color:#d4d4d4">2,480 <u>x</u> 3,508 (124.2 MiB)</div>
<svg style="left:0;top:0" width="1920" height="988">
<circle cx="1521.5" cy="964.5" r="15.2" fill="#2e2e2e" stroke="#4f4f4f" stroke-width="0.8"/>
<path d="M1521.5 950.5v28 M1507 964.5h13" stroke="#4a4a4a" stroke-width="1" stroke-dasharray="1.2 1.8"/>
<path d="M1521.5 964.5h16" stroke="#e0e0e0" stroke-width="1.2"/>
<circle cx="1521.5" cy="964.5" r="1.8" fill="#e6e6e6"/><circle cx="1537.3" cy="964.5" r="1.8" fill="#e6e6e6"/>
</svg>
<div class="t" style="left:1547px;top:956.5px;font-size:17.6px;color:#d4d4d4">0.00°</div>
<div class="t" style="left:1739px;top:956.5px;font-size:17.6px;color:#d4d4d4">50.0%</div>
<div class="a" style="left:1805px;top:961px;width:81px;height:7px;border-radius:3px;background:#353535"></div>
<div class="a" style="left:1805px;top:962px;width:18px;height:5px;background:#5c7a99"></div>
<div class="a" style="left:1823px;top:954px;width:19px;height:19px;border-radius:3px;background:#444;border:1px solid #2b2b2b;box-shadow:inset 0 0 0 1px #555"></div>
<svg style="left:0;top:0" width="1920" height="988">
<path d="M1892 957h22.5v14h-22.5z M1903 971v3.5 M1895.5 975h15" fill="none" stroke="#d4d4d4" stroke-width="1.3"/>
<rect x="1902" y="963" width="2.2" height="2.2" fill="#d4d4d4"/>
</svg>


<!-- RIGHT DOCKERS -->

<div class="a" style="left:1649px;top:67px;width:271px;height:877px;background:#474747"></div>
<div class="a" style="left:1649px;top:67px;width:1px;height:877px;background:#3f3f3f"></div><svg style="left:0;top:0" width="1920" height="988"><g fill="#9a9a9a"><rect x="1654" y="499" width="1.5" height="1.5"/><rect x="1654" y="502" width="1.5" height="1.5"/><rect x="1654" y="505" width="1.5" height="1.5"/><rect x="1654" y="508" width="1.5" height="1.5"/><rect x="1654" y="511" width="1.5" height="1.5"/><rect x="1654" y="514" width="1.5" height="1.5"/></g></svg>
<svg style="left:0;top:0" width="1920" height="988">
<circle cx="1668" cy="77" r="7.3" fill="none" stroke="#cfcfcf" stroke-width="1.1"/>
<path d="M1664.2 77.5h7.6v4h-7.6z" fill="#cfcfcf"/>
<path d="M1665.5 77.5v-2.2a2.5 2.5 0 0 1 5 0" fill="none" stroke="#cfcfcf" stroke-width="1.2"/>
<path d="M1881.5 75.5h9v6.5h-9z M1885.5 75.5v-5.5h9.5v7h-4.5" fill="none" stroke="#d4d4d4" stroke-width="1.3"/>
<path d="M1905 72l10 10 M1915 72l-10 10" stroke="#d8d8d8" stroke-width="1.5"/>
</svg>
<div class="t" style="left:1682px;top:69px;font-size:16px;letter-spacing:-0.32px;color:#d4d4d4">Advanced Color Selector</div>
<!-- color selector -->
<div class="a" style="left:1659px;top:89px;width:244px;height:163px;background:#fff"></div>
<div class="a" style="left:1719px;top:90px;width:125px;height:125px;border-radius:50%;background:conic-gradient(#80ff00 0deg,#00ff00 30deg,#00ff80 60deg,#00ffff 90deg,#0080ff 120deg,#0000ff 150deg,#8000ff 180deg,#ff00ff 210deg,#ff0080 240deg,#ff0000 270deg,#ff8000 300deg,#ffff00 330deg,#80ff00 360deg)"></div>
<div class="a" style="left:1729px;top:100px;width:105px;height:105px;border-radius:50%;background:#fff"></div>
<svg style="left:0;top:0" width="1920" height="988">
<defs>
<linearGradient id="triA" x1="1780" y1="101" x2="1782" y2="178" gradientUnits="userSpaceOnUse"><stop offset="0" stop-color="#000"/><stop offset="1" stop-color="#000" stop-opacity="0"/></linearGradient>
<linearGradient id="triB" x1="1738" y1="178" x2="1827" y2="178" gradientUnits="userSpaceOnUse"><stop offset="0" stop-color="#fff"/><stop offset="1" stop-color="#00ffff"/></linearGradient>
</defs>
<path d="M1780.5 101l46.5 77h-89z" fill="url(#triB)"/>
<path d="M1780.5 101l46.5 77h-89z" fill="url(#triA)"/>
<path d="M1776 100a4.5 4.5 0 0 0 9 0" fill="none" stroke="#333" stroke-width="1"/>
<path d="M1833 151h10" stroke="#333" stroke-width="1.2"/>
<rect x="1664" y="93.5" width="23" height="23" fill="none" stroke="#cfcfcf" stroke-width="1.5"/>
<rect x="1664" y="93" width="23" height="3" fill="#cfcfcf"/>
<path d="M1668.5 100v11 M1673 101h10 M1673 106h10 M1673 111h10" stroke="#d0d0d0" stroke-width="1.6"/>
<circle cx="1911" cy="97" r="5.5" fill="none" stroke="#d4d4d4" stroke-width="1.4"/><path d="M1907 93l8 8" stroke="#d4d4d4" stroke-width="1.4"/>
</svg>
<div class="a" style="left:1659px;top:216px;width:244px;height:10px;background:#000"></div>
<div class="a" style="left:1659px;top:227px;width:244px;height:10px;background:linear-gradient(90deg,#000 0,#000 52%,#7a3a3c 100%)"></div>
<div class="a" style="left:1659px;top:238px;width:244px;height:10px;background:linear-gradient(90deg,#000 0,#000 52%,#8a8a8a 100%)"></div>
<svg style="left:0;top:0" width="1920" height="988">
<path d="M1776.5 216v32 M1786.5 216v32" stroke="#bbb" stroke-width="1.2"/>
<path d="M1661 262a6 6 0 0 1 10-5 M1673 256a6 6 0 0 1-10 6" fill="none" stroke="#cfcfcf" stroke-width="1.6"/>
<path d="M1670 253l2.5 3-3.5.5z M1664 265l-2.5-3 3.5-.5z" fill="#cfcfcf"/>
<g fill="#8a8a8a"><rect x="1783" y="272" width="1.5" height="1.5"/><rect x="1786" y="272" width="1.5" height="1.5"/><rect x="1789" y="272" width="1.5" height="1.5"/><rect x="1792" y="272" width="1.5" height="1.5"/><rect x="1795" y="272" width="1.5" height="1.5"/><rect x="1798" y="272" width="1.5" height="1.5"/>
<rect x="1783" y="609" width="1.5" height="1.5"/><rect x="1786" y="609" width="1.5" height="1.5"/><rect x="1789" y="609" width="1.5" height="1.5"/><rect x="1792" y="609" width="1.5" height="1.5"/><rect x="1795" y="609" width="1.5" height="1.5"/><rect x="1798" y="609" width="1.5" height="1.5"/></g>
</svg>
<svg style="left:0;top:0" width="1920" height="988">
<circle cx="1668" cy="288" r="7.3" fill="none" stroke="#cfcfcf" stroke-width="1.1"/>
<path d="M1664.2 288.5h7.6v4h-7.6z" fill="#cfcfcf"/>
<path d="M1665.5 288.5v-2.2a2.5 2.5 0 0 1 5 0" fill="none" stroke="#cfcfcf" stroke-width="1.2"/>
<path d="M1881.5 286.5h9v6.5h-9z M1885.5 286.5v-5.5h9.5v7h-4.5" fill="none" stroke="#d4d4d4" stroke-width="1.3"/>
<path d="M1905 283l10 10 M1915 283l-10 10" stroke="#d8d8d8" stroke-width="1.5"/>
</svg>
<div class="t" style="left:1682px;top:280px;font-size:16px;letter-spacing:-0.32px;color:#d4d4d4">Layers</div>
<div class="a" style="left:1660px;top:300px;width:225px;height:30px;border-radius:3px;background:#434343;border:1px solid #303030;box-shadow:inset 0 1px 0 #4e4e4e"></div>
<div class="t" style="left:1665px;top:306px;font-size:16px;color:#d6d6d6">Normal</div>
<svg style="left:0;top:0" width="1920" height="988">
<path d="M1863 312h12l-6 6z" fill="#9a9a9a"/>
<path d="M1896 307h18l-7 8v9l-4-3v-6z" fill="none" stroke="#d4d4d4" stroke-width="1.3"/>
<path d="M1905 321h12l-6 6z" fill="#aaa"/>
<path d="M1896 343h14 M1896 347h14 M1896 351h14" stroke="#d4d4d4" stroke-width="1.8"/>
<path d="M1905 355h12l-6 6z" fill="#aaa"/>
</svg>
<div class="a" style="left:1660px;top:334px;width:225px;height:30px;border-radius:3px;background:#3b3b3b;border:1px solid #303030"></div>
<div class="a" style="left:1660px;top:335px;width:204px;height:28px;background:#52708d;border-radius:2px 0 0 2px"></div>
<div class="a" style="left:1864px;top:335px;width:20px;height:28px;background:#434343;border-left:1px solid #363636"></div>
<div class="t" style="left:1710px;top:340px;font-size:15.7px;color:#e0e0e0">Opacity: &nbsp;100%</div>
<svg style="left:0;top:0" width="1920" height="988">
<path d="M1869 344l5.5-5.5 5.5 5.5z" fill="#6c6c6c"/><path d="M1869 351h11l-5.5 5.5z" fill="#9c9c9c"/>
</svg>
<!-- layer list -->
<div class="a" style="left:1659px;top:366px;width:261px;height:208px;background:#363636"></div>
<div class="a" style="left:1659px;top:393px;width:261px;height:1px;background:#3c3c3c"></div>
<div class="a" style="left:1659px;top:420px;width:261px;height:1px;background:#3c3c3c"></div>
<div class="a" style="left:1659px;top:447px;width:261px;height:1px;background:#3c3c3c"></div>
<div class="a" style="left:1659px;top:474px;width:261px;height:1px;background:#3c3c3c"></div>
<div class="a" style="left:1682px;top:367px;width:236px;height:26px;background:#52708d"></div>
<div class="a" style="left:1688px;top:369px;width:16px;height:22px;border:1px solid #222;background:repeating-conic-gradient(#ddd 0 25%,#fff 0 50%) 0 0/6px 6px"></div>
<div class="a" style="left:1687px;top:396px;width:18px;height:21px;background:repeating-conic-gradient(#ddd 0 25%,#fff 0 50%) 0 0/6px 6px"></div>
<div class="a" style="left:1686px;top:423px;width:20px;height:21px;background:#8f8c85"></div>
<div class="a" style="left:1688px;top:451px;width:16px;height:21px;background:#fff"></div>
<svg style="left:0;top:0" width="1920" height="988">
<path d="M1690 404c3-2 6-3 10-1 M1691 409c3 0 6-1 10 1 M1692 412h6" stroke="#111" stroke-width="1" fill="none" stroke-dasharray="1.5 1"/>
<g fill="#d8d8d8">
<path d="M1663 380.5c2.5-4 5-5.5 8-5.5s5.5 1.5 8 5.5c-2.5 4-5 5.5-8 5.5s-5.5-1.5-8-5.5z M1663 407.5c2.5-4 5-5.5 8-5.5s5.5 1.5 8 5.5c-2.5 4-5 5.5-8 5.5s-5.5-1.5-8-5.5z M1663 461.5c2.5-4 5-5.5 8-5.5s5.5 1.5 8 5.5c-2.5 4-5 5.5-8 5.5s-5.5-1.5-8-5.5z"/>
</g>
<g fill="#555"><circle cx="1671" cy="379.5" r="3.2"/><circle cx="1671" cy="406.5" r="3.2"/><circle cx="1671" cy="460.5" r="3.2"/></g>
<g fill="#eee"><circle cx="1671" cy="379" r="2.2"/><circle cx="1671" cy="406" r="2.2"/><circle cx="1671" cy="460" r="2.2"/></g>
<ellipse cx="1671" cy="434.5" rx="7" ry="4.5" fill="none" stroke="#555" stroke-width="1"/>
<path d="M1715.5 374v-5.5h7v6.5l-2.5 2.5h-4.5v-2.5" fill="none" stroke="#d8d8d8" stroke-width="1.1"/><path d="M1713.3 370.4l5.7 5" stroke="#d8d8d8" stroke-width="1.3" stroke-linecap="round"/><path d="M1715.5 401v-5.5h7v6.5l-2.5 2.5h-4.5v-2.5" fill="none" stroke="#d8d8d8" stroke-width="1.1"/><path d="M1713.3 397.4l5.7 5" stroke="#d8d8d8" stroke-width="1.3" stroke-linecap="round"/><path d="M1715.5 428v-5.5h7v6.5l-2.5 2.5h-4.5v-2.5" fill="none" stroke="#777" stroke-width="1.1"/><path d="M1713.3 424.4l5.7 5" stroke="#777" stroke-width="1.3" stroke-linecap="round"/><path d="M1715.5 455v-5.5h7v6.5l-2.5 2.5h-4.5v-2.5" fill="none" stroke="#d8d8d8" stroke-width="1.1"/><path d="M1713.3 451.4l5.7 5" stroke="#d8d8d8" stroke-width="1.3" stroke-linecap="round"/>
<path d="M1864 378h12v7.5h-12z" fill="#7d95ab"/><path d="M1871 378v-3.5a2.6 2.6 0 0 1 4.2 -1.2" fill="none" stroke="#7d95ab" stroke-width="1.6"/><path d="M1864 405h12v7.5h-12z" fill="#6f6f6f"/><path d="M1871 405v-3.5a2.6 2.6 0 0 1 4.2 -1.2" fill="none" stroke="#6f6f6f" stroke-width="1.6"/><path d="M1864 432h12v7.5h-12z" fill="#6f6f6f"/><path d="M1871 432v-3.5a2.6 2.6 0 0 1 4.2 -1.2" fill="none" stroke="#6f6f6f" stroke-width="1.6"/><path d="M1864 459h12v7.5h-12z" fill="#6f6f6f"/><path d="M1871 459v-3.5a2.6 2.6 0 0 1 4.2 -1.2" fill="none" stroke="#6f6f6f" stroke-width="1.6"/>
</svg>
<div class="t" style="left:1881px;top:366px;font-size:21px;font-style:italic;color:#7d95ab;font-family:'Liberation Serif',serif">α</div>
<div class="t" style="left:1881px;top:393px;font-size:21px;font-style:italic;color:#6f6f6f;font-family:'Liberation Serif',serif">α</div>
<div class="t" style="left:1881px;top:420px;font-size:21px;font-style:italic;color:#6f6f6f;font-family:'Liberation Serif',serif">α</div>
<div class="t" style="left:1881px;top:447px;font-size:21px;font-style:italic;color:#6f6f6f;font-family:'Liberation Serif',serif">α</div>
<div class="a" style="left:1900px;top:373px;width:15px;height:15px;background:repeating-conic-gradient(#6f89a3 0 25%,#8ca2b8 0 50%) 0 0/10px 10px"></div>
<div class="a" style="left:1900px;top:400px;width:15px;height:15px;background:repeating-conic-gradient(#595959 0 25%,#707070 0 50%) 0 0/10px 10px"></div>
<div class="a" style="left:1900px;top:427px;width:15px;height:15px;background:repeating-conic-gradient(#595959 0 25%,#707070 0 50%) 0 0/10px 10px"></div>
<div class="a" style="left:1900px;top:454px;width:15px;height:15px;background:repeating-conic-gradient(#595959 0 25%,#707070 0 50%) 0 0/10px 10px"></div>
<div class="t" style="left:1727px;top:371px;font-size:16px;font-weight:bold;color:#d8d8d8">pírko</div>
<div class="t" style="left:1727px;top:400px;font-size:15px;color:#d8d8d8">růže</div>
<div class="t" style="left:1727px;top:427px;font-size:15px;color:#8c8c8c">Paint Layer 2 (pa...</div>
<div class="t" style="left:1727px;top:454px;font-size:15px;color:#d8d8d8">Layer 1</div>
<!-- layer buttons -->
<svg style="left:0;top:0" width="1920" height="988">
<g fill="none" stroke="#d8d8d8" stroke-width="1.6">
<path d="M1674 580v18 M1665 589h18"/>
<path d="M1719.5 580.5h13.5v13h-13.5z M1715.5 584v14.5h14" />
<path d="M1746 584l9.5 9.5 9.5-9.5"/>
<path d="M1778 594l9.5-9.5 9.5 9.5"/>
<path d="M1811 583h19 M1811 589h19 M1811 595h19" stroke-width="1.4"/>
</g>
<g fill="#d8d8d8"><rect x="1819" y="581" width="3" height="4"/><rect x="1812" y="587" width="3" height="4"/><rect x="1822" y="593" width="3" height="4"/>
<path d="M1897 582h15v2h-15z M1902 579h5v2h-5z M1898 585h13l-1 14h-11z"/></g>
<path d="M1692 586h12l-6 6z M1838 586h12l-6 6z" fill="#9a9a9a"/>
</svg>
<svg style="left:0;top:0" width="1920" height="988">
<circle cx="1668" cy="625" r="7.3" fill="none" stroke="#cfcfcf" stroke-width="1.1"/>
<path d="M1664.2 625.5h7.6v4h-7.6z" fill="#cfcfcf"/>
<path d="M1665.5 625.5v-2.2a2.5 2.5 0 0 1 5 0" fill="none" stroke="#cfcfcf" stroke-width="1.2"/>
<path d="M1881.5 623.5h9v6.5h-9z M1885.5 623.5v-5.5h9.5v7h-4.5" fill="none" stroke="#d4d4d4" stroke-width="1.3"/>
<path d="M1905 620l10 10 M1915 620l-10 10" stroke="#d8d8d8" stroke-width="1.5"/>
</svg>
<div class="t" style="left:1682px;top:617px;font-size:16px;letter-spacing:-0.32px;color:#d4d4d4">Brush Presets</div>
<div class="a" style="left:1660px;top:637px;width:127px;height:30px;border-radius:3px;background:#434343;border:1px solid #303030;box-shadow:inset 0 1px 0 #4e4e4e"></div>
<div class="t" style="left:1664px;top:643px;font-size:16px;color:#d6d6d6">All</div>
<div class="a" style="left:1789px;top:637px;width:66px;height:30px;border-radius:3px;background:#434343;border:1px solid #303030;box-shadow:inset 0 1px 0 #4e4e4e"></div>
<div class="t" style="left:1817px;top:643px;font-size:16px;color:#d6d6d6">Tag</div>
<svg style="left:0;top:0" width="1920" height="988">
<path d="M1765 651h12l-6 6z M1841 657h11l-5.5 5.5z" fill="#9a9a9a"/>
<path d="M1796.5 641.5h12v20l-6-5-6 5z" fill="none" stroke="#d4d4d4" stroke-width="1.8"/>
<path d="M1862 645h19 M1862 651h19 M1862 657h19" stroke="#d4d4d4" stroke-width="2"/>
<rect x="1891" y="640" width="23" height="23" fill="none" stroke="#d4d4d4" stroke-width="1.4"/>
<path d="M1903 641v8" stroke="#d4d4d4" stroke-width="1.2" stroke-dasharray="1 1"/>
</svg>
<!-- preset grid -->
<div class="a" style="left:1659px;top:669px;width:261px;height:244px;background:#393939"></div>
<div class="a" style="left:1898px;top:670px;width:20px;height:242px;background:#3b3b3b"></div>
<div class="a" style="left:1898px;top:670px;width:20px;height:20px;background:#414141;border:1px solid #545454"></div>
<div class="a" style="left:1898px;top:691px;width:20px;height:39px;background:#444;border:1px solid #555"></div>
<div class="a" style="left:1898px;top:892px;width:20px;height:20px;background:#414141;border:1px solid #545454"></div>
<svg style="left:0;top:0" width="1920" height="988">
<path d="M1902.5 684.5l5.5-6 5.5 6z M1902.5 899l5.5 6 5.5-6z" fill="#9a9a9a"/>
</svg>
<svg style="left:0;top:0" width="0" height="0"><defs><pattern id="chk" width="6" height="6" patternUnits="userSpaceOnUse"><rect width="6" height="6" fill="#f0f0f0"/><rect width="3" height="3" fill="#a8a8a8"/><rect x="3" y="3" width="3" height="3" fill="#a8a8a8"/></pattern>
<pattern id="chkb" width="6" height="6" patternUnits="userSpaceOnUse"><rect width="6" height="6" fill="#b8ddf5"/><rect width="3" height="3" fill="#7fb0d8"/><rect x="3" y="3" width="3" height="3" fill="#7fb0d8"/></pattern>
<linearGradient id="gs" x1="0" x2="1"><stop offset="0" stop-color="#d0d0d0"/><stop offset="1" stop-color="#333"/></linearGradient>
<linearGradient id="silver" x1="0" y1="0" x2="1" y2="1"><stop offset="0" stop-color="#fafafa"/><stop offset=".5" stop-color="#b0b0b0"/><stop offset="1" stop-color="#707070"/></linearGradient>
<radialGradient id="blob"><stop offset="0" stop-color="#222"/><stop offset=".6" stop-color="#333" stop-opacity=".9"/><stop offset="1" stop-color="#444" stop-opacity="0"/></radialGradient>
</defs></svg><svg style="left:1660px;top:670px" width="59" height="59" viewBox="0 0 59 59"><rect width="59" height="59" fill="#d0d0d0"/><rect x="0" y="0" width="59" height="59" fill="#5a7fa3"/><rect x="4" y="4" width="51" height="51" fill="#8ec0e4"/><path d="M10 52c0-10 4-16 12-20l8 10c-6 4-12 8-20 10z" fill="url(#chkb)"/><path d="M14 34l24-22 12 8-22 20z" fill="#a8e4ff"/><path d="M14 34l14 6v6l-14-6z" fill="#6fc0ea"/><path d="M28 40l22-20v6l-22 20z" fill="#80cdf0"/><path d="M30 16l16-12 10 6-16 12z" fill="#2d56a8"/><path d="M40 22l16-12v6l-16 12z" fill="#1f4590"/><path d="M30 55c8-2 16-6 24-12v10z" fill="url(#chkb)"/></svg><svg style="left:1721px;top:670px" width="59" height="59" viewBox="0 0 59 59"><rect width="59" height="59" fill="#d0d0d0"/><path d="M30 34l26-28 3 3v8l-22 24z" fill="#3a66c8"/><path d="M33 32l5 5-4 3-5-4z" fill="#eee"/><path d="M40 28l18-20" stroke="#7fa8f0" stroke-width="2"/><path d="M18 46c2-6 8-6 10-2s6 4 10-2" fill="none" stroke="url(#chk)" stroke-width="6"/></svg><svg style="left:1781px;top:670px" width="59" height="59" viewBox="0 0 59 59"><rect width="59" height="59" fill="#d0d0d0"/><path d="M25 36c-2-10 2-22 10-30 6-6 14-6 24-6v30c-4 6-10 8-18 10-8 2-14 2-16-4z" fill="#7c7c7c"/><path d="M34 10c8-6 16-8 25-6" stroke="#8e8e8e" stroke-width="4" fill="none"/><path d="M8 44c10-2 24 0 36 4" fill="none" stroke="url(#chk)" stroke-width="10" opacity=".7"/></svg><svg style="left:1660px;top:731px" width="59" height="59" viewBox="0 0 59 59"><rect width="59" height="59" fill="#d0d0d0"/><circle cx="10" cy="50" r="24" fill="url(#blob)"/><path d="M30 28l28-26 1 14-22 20z" fill="url(#silver)"/><path d="M38 22l8-8 5 6-8 7z" fill="#151515"/><path d="M24 34c2-6 6-8 10-8l4 6c-4 4-8 6-14 2z" fill="#bdbdbd"/><path d="M27 15c2 0 4 2 4 5" stroke="#aaa" stroke-width="2.5" fill="none"/><circle cx="38" cy="37" r="1.6" fill="none" stroke="#888"/></svg><svg style="left:1721px;top:731px" width="59" height="59" viewBox="0 0 59 59"><rect width="59" height="59" fill="#d0d0d0"/><path d="M28 30l28-30h3v16l-24 22z" fill="#2a2a2a"/><path d="M22 40l6-10 7 8z" fill="#c8c8c8"/><path d="M21 41l2-3 1.5 1.5z" fill="#222"/><path d="M44 12l8-8" stroke="#555" stroke-width="3"/><path d="M18 49c14 0 28-2 41-9" fill="none" stroke="#202025" stroke-width="7" stroke-linecap="round"/></svg><svg style="left:1781px;top:731px" width="59" height="59" viewBox="0 0 59 59"><rect width="59" height="59" fill="#d0d0d0"/><path d="M28 30l28-30h3v16l-24 22z" fill="#262626"/><path d="M22 40l6-10 7 8z" fill="#151515"/><path d="M44 12l8-8" stroke="#555" stroke-width="3"/><path d="M17 41c2 8 20 10 42 2" fill="none" stroke="url(#gs)" stroke-width="6"/></svg><svg style="left:1660px;top:791px" width="59" height="59" viewBox="0 0 59 59"><rect width="59" height="59" fill="#d0d0d0"/><path d="M26 36l30-30 3 3v10l-26 22z" fill="url(#silver)"/><path d="M24 34l4 4" stroke="#d8843a" stroke-width="2"/><path d="M20 40l6-6 4 4z" fill="#eee"/><path d="M14 46c10-2 16 2 24 2s14-2 20-4" fill="none" stroke="url(#gs)" stroke-width="7" opacity=".8"/></svg><svg style="left:1721px;top:791px" width="59" height="59" viewBox="0 0 59 59"><rect width="59" height="59" fill="#d0d0d0"/><path d="M26 36l30-30 3 3v10l-26 22z" fill="#8a8a8a"/><path d="M20 40l6-6 4 4z" fill="#e8e8e8"/><path d="M14 46c8-4 16 4 24 2s14-4 20-2" fill="none" stroke="#888" stroke-width="8" opacity=".6"/></svg><svg style="left:1781px;top:791px" width="59" height="59" viewBox="0 0 59 59"><rect width="59" height="59" fill="#d0d0d0"/><path d="M34 24l24-20v8l-20 16z" fill="#666"/><path d="M30 28l8-6 4 4-8 6z" fill="#c8b8e8"/><path d="M20 38c4-6 8-10 12-10l2 4c-4 4-8 6-14 6z" fill="#3a2a22"/><path d="M16 46c8 6 10 0 16 2s8 8 26-2" fill="none" stroke="#222" stroke-width="4"/></svg><svg style="left:1660px;top:851px" width="59" height="59" viewBox="0 0 59 59"><rect width="59" height="59" fill="#d0d0d0"/><path d="M36 22l22-18v8l-18 16z" fill="#e8901a"/><path d="M30 28l8-6 4 4-8 6z" fill="#c8b8e8"/><path d="M16 40c4-6 10-10 14-10l2 4c-4 4-10 6-16 6z" fill="#5a3a2a"/><path d="M10 48c8 8 12-2 18 0s10 8 30-2" fill="none" stroke="#777" stroke-width="4"/></svg><svg style="left:1721px;top:851px" width="59" height="59" viewBox="0 0 59 59"><rect width="59" height="59" fill="#d0d0d0"/><path d="M36 22l22-18v8l-18 16z" fill="#e8901a"/><path d="M30 28l8-6 4 4-8 6z" fill="#c8b8e8"/><path d="M22 34c3-3 6-6 8-6l2 3c-3 3-6 4-10 3z" fill="#5a3a2a"/><path d="M14 50c8 6 10-6 16-2s10 8 28-4" fill="none" stroke="#666" stroke-width="1.6"/></svg><svg style="left:1781px;top:851px" width="59" height="59" viewBox="0 0 59 59"><rect width="59" height="59" fill="#d0d0d0"/><path d="M26 32l30-30 3 8-24 26z" fill="#2f7ac0"/><path d="M20 38l6-6 8 4-6 6z" fill="#dcc090"/><path d="M20 38l3-3 2 4z" fill="#333"/><path d="M40 14l12-8" stroke="#e0c040" stroke-width="1.5"/><path d="M14 44c6 2 4 6 10 6s14-6 32-8" fill="none" stroke="#333" stroke-width="4" stroke-dasharray="2 1" opacity=".8"/></svg><div class="a" style="left:1660px;top:911px;width:59px;height:2px;background:#c8c8c8"></div><div class="a" style="left:1721px;top:911px;width:59px;height:2px;background:#c8c8c8"></div><div class="a" style="left:1781px;top:911px;width:59px;height:2px;background:#c8c8c8"></div>
<div class="a" style="left:1659px;top:914px;width:137px;height:28px;border-radius:3px;background:#3a3a3a;border:1px solid #333"></div>
<div class="t" style="left:1662px;top:920px;font-size:15.5px;color:#8a8a8a">Search</div>
<div class="a" style="left:1805px;top:918px;width:20px;height:20px;background:#3a3a3a;border:1px solid #333"></div>
<div class="t" style="left:1834px;top:919px;font-size:15.4px;color:#d4d4d4">Filter in Tag</div>


<!-- taskbar peek -->
<div class="a" style="left:0;top:985px;width:1920px;height:3px;background:#1c1c1c"></div>
<div class="a" style="left:72px;top:985px;width:432px;height:3px;background:#ececec"></div>
<div class="a" style="left:580px;top:985px;width:63px;height:3px;background:#444"></div>
</body></html>
